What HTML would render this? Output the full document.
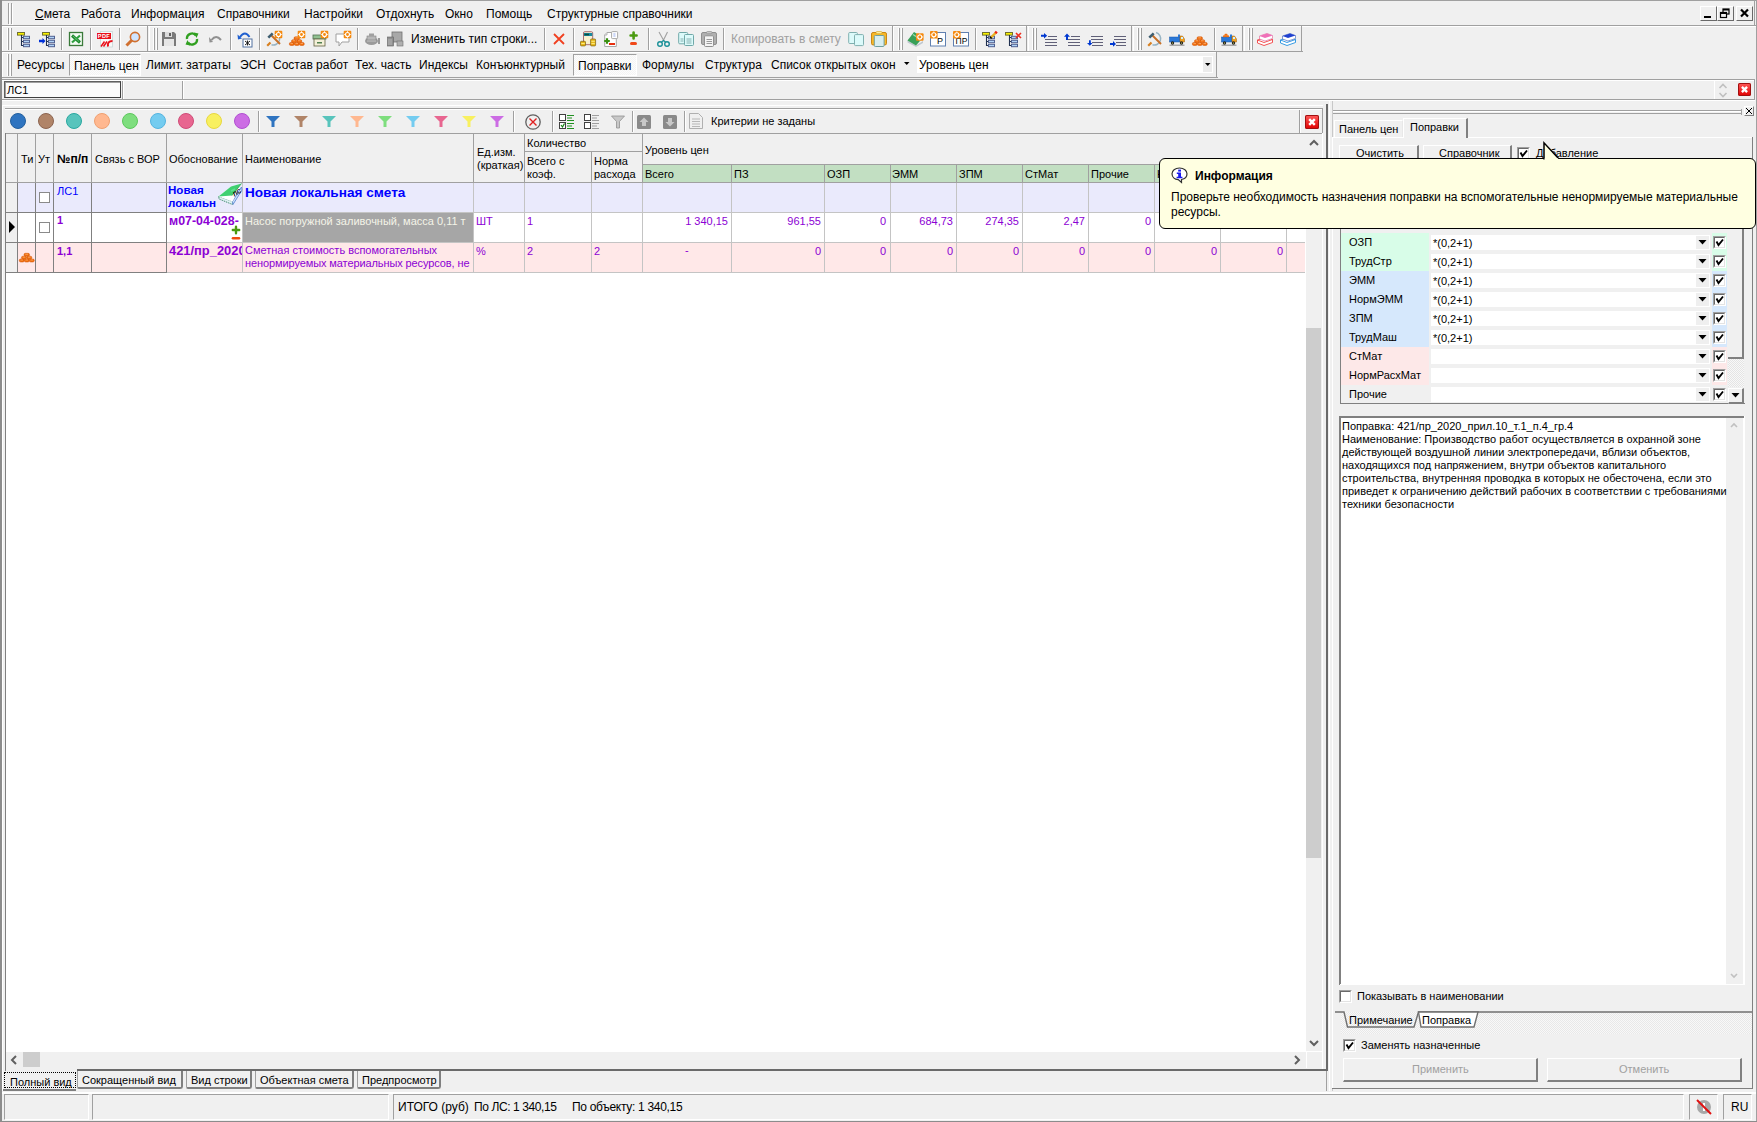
<!DOCTYPE html><html><head><meta charset="utf-8"><style>*{margin:0;padding:0}
html,body{width:1757px;height:1122px;overflow:hidden;background:#f0f0f0}
body div{position:absolute}
.t{white-space:nowrap;font-family:"Liberation Sans",sans-serif}
svg{position:absolute}</style></head><body><div style="left:0px;top:0px;width:1757px;height:1px;background:#a0a0a0"></div>
<div style="left:0px;top:0px;width:2px;height:1122px;background:#8c8c8c"></div>
<div style="left:1756px;top:0px;width:1px;height:1122px;background:#a0a0a0"></div>
<div style="left:0px;top:1121px;width:1757px;height:1px;background:#8c8c8c"></div>
<div style="left:8px;top:3px;width:1px;height:21px;background:#a0a0a0"></div>
<div style="left:9px;top:4px;width:1px;height:21px;background:#ffffff"></div>
<div style="left:11px;top:3px;width:1px;height:21px;background:#a0a0a0"></div>
<div style="left:12px;top:4px;width:1px;height:21px;background:#ffffff"></div>
<div class="t" style="left:35px;top:8px;font-size:12px;line-height:12px;font-weight:400;color:#000;"><u>С</u>мета</div>
<div class="t" style="left:81px;top:8px;font-size:12px;line-height:12px;font-weight:400;color:#000;">Работа</div>
<div class="t" style="left:131px;top:8px;font-size:12px;line-height:12px;font-weight:400;color:#000;">Информация</div>
<div class="t" style="left:217px;top:8px;font-size:12px;line-height:12px;font-weight:400;color:#000;">Справочники</div>
<div class="t" style="left:304px;top:8px;font-size:12px;line-height:12px;font-weight:400;color:#000;">Настройки</div>
<div class="t" style="left:376px;top:8px;font-size:12px;line-height:12px;font-weight:400;color:#000;">Отдохнуть</div>
<div class="t" style="left:445px;top:8px;font-size:12px;line-height:12px;font-weight:400;color:#000;">Окно</div>
<div class="t" style="left:486px;top:8px;font-size:12px;line-height:12px;font-weight:400;color:#000;">Помощь</div>
<div class="t" style="left:547px;top:8px;font-size:12px;line-height:12px;font-weight:400;color:#000;">Структурные справочники</div>
<div style="left:1700px;top:6px;width:17px;height:15px;border-top:1px solid #ffffff;border-left:1px solid #ffffff;border-right:1px solid #696969;border-bottom:1px solid #696969;box-sizing:border-box;background:#f0f0f0;"></div>
<div style="left:1717px;top:6px;width:17px;height:15px;border-top:1px solid #ffffff;border-left:1px solid #ffffff;border-right:1px solid #696969;border-bottom:1px solid #696969;box-sizing:border-box;background:#f0f0f0;"></div>
<div style="left:1736px;top:6px;width:17px;height:15px;border-top:1px solid #ffffff;border-left:1px solid #ffffff;border-right:1px solid #696969;border-bottom:1px solid #696969;box-sizing:border-box;background:#f0f0f0;"></div>
<svg style="position:absolute;left:1700px;top:6px;overflow:visible" width="17" height="15" viewBox="0 0 17 15"><rect x="4" y="10" width="7" height="2" fill="#000"/></svg>
<svg style="position:absolute;left:1717px;top:6px;overflow:visible" width="17" height="15" viewBox="0 0 17 15"><rect x="6" y="3" width="6" height="5" fill="none" stroke="#000" stroke-width="1.2"/><rect x="6" y="3" width="6" height="1.5" fill="#000"/><rect x="3.5" y="6.5" width="6" height="5" fill="#f0f0f0" stroke="#000" stroke-width="1.2"/><rect x="3.5" y="6.5" width="6" height="1.5" fill="#000"/></svg>
<svg style="position:absolute;left:1736px;top:6px;overflow:visible" width="17" height="15" viewBox="0 0 17 15"><path d="M5 3.5 L12 10.5 M12 3.5 L5 10.5" stroke="#000" stroke-width="2.2"/></svg>
<div style="left:1754px;top:1px;width:1px;height:25px;background:#a0a0a0"></div>
<div style="left:2px;top:25px;width:1754px;height:1px;background:#a0a0a0"></div>
<div style="left:2px;top:26px;width:1754px;height:1px;background:#ffffff"></div>
<div style="left:2px;top:26px;width:145px;height:1px;background:#ffffff"></div>
<div style="left:2px;top:26px;width:1px;height:25px;background:#ffffff"></div>
<div style="left:2px;top:51px;width:147px;height:1px;background:#a0a0a0"></div>
<div style="left:147px;top:26px;width:1px;height:26px;background:#a0a0a0"></div>
<div style="left:149px;top:26px;width:743px;height:1px;background:#ffffff"></div>
<div style="left:149px;top:26px;width:1px;height:25px;background:#ffffff"></div>
<div style="left:149px;top:51px;width:745px;height:1px;background:#a0a0a0"></div>
<div style="left:892px;top:26px;width:1px;height:26px;background:#a0a0a0"></div>
<div style="left:893px;top:26px;width:133px;height:1px;background:#ffffff"></div>
<div style="left:893px;top:26px;width:1px;height:25px;background:#ffffff"></div>
<div style="left:893px;top:51px;width:135px;height:1px;background:#a0a0a0"></div>
<div style="left:1026px;top:26px;width:1px;height:26px;background:#a0a0a0"></div>
<div style="left:1028px;top:26px;width:103px;height:1px;background:#ffffff"></div>
<div style="left:1028px;top:26px;width:1px;height:25px;background:#ffffff"></div>
<div style="left:1028px;top:51px;width:105px;height:1px;background:#a0a0a0"></div>
<div style="left:1131px;top:26px;width:1px;height:26px;background:#a0a0a0"></div>
<div style="left:1133px;top:26px;width:109px;height:1px;background:#ffffff"></div>
<div style="left:1133px;top:26px;width:1px;height:25px;background:#ffffff"></div>
<div style="left:1133px;top:51px;width:111px;height:1px;background:#a0a0a0"></div>
<div style="left:1242px;top:26px;width:1px;height:26px;background:#a0a0a0"></div>
<div style="left:1244px;top:26px;width:57px;height:1px;background:#ffffff"></div>
<div style="left:1244px;top:26px;width:1px;height:25px;background:#ffffff"></div>
<div style="left:1244px;top:51px;width:59px;height:1px;background:#a0a0a0"></div>
<div style="left:1301px;top:26px;width:1px;height:26px;background:#a0a0a0"></div>
<div style="left:7px;top:28px;width:1px;height:22px;background:#ffffff"></div>
<div style="left:8px;top:28px;width:1px;height:22px;background:#a0a0a0"></div>
<div style="left:10px;top:28px;width:1px;height:22px;background:#ffffff"></div>
<div style="left:11px;top:28px;width:1px;height:22px;background:#a0a0a0"></div>
<div style="left:153px;top:28px;width:1px;height:22px;background:#ffffff"></div>
<div style="left:154px;top:28px;width:1px;height:22px;background:#a0a0a0"></div>
<div style="left:156px;top:28px;width:1px;height:22px;background:#ffffff"></div>
<div style="left:157px;top:28px;width:1px;height:22px;background:#a0a0a0"></div>
<div style="left:898px;top:28px;width:1px;height:22px;background:#ffffff"></div>
<div style="left:899px;top:28px;width:1px;height:22px;background:#a0a0a0"></div>
<div style="left:901px;top:28px;width:1px;height:22px;background:#ffffff"></div>
<div style="left:902px;top:28px;width:1px;height:22px;background:#a0a0a0"></div>
<div style="left:1032px;top:28px;width:1px;height:22px;background:#ffffff"></div>
<div style="left:1033px;top:28px;width:1px;height:22px;background:#a0a0a0"></div>
<div style="left:1035px;top:28px;width:1px;height:22px;background:#ffffff"></div>
<div style="left:1036px;top:28px;width:1px;height:22px;background:#a0a0a0"></div>
<div style="left:1137px;top:28px;width:1px;height:22px;background:#ffffff"></div>
<div style="left:1138px;top:28px;width:1px;height:22px;background:#a0a0a0"></div>
<div style="left:1140px;top:28px;width:1px;height:22px;background:#ffffff"></div>
<div style="left:1141px;top:28px;width:1px;height:22px;background:#a0a0a0"></div>
<div style="left:1248px;top:28px;width:1px;height:22px;background:#ffffff"></div>
<div style="left:1249px;top:28px;width:1px;height:22px;background:#a0a0a0"></div>
<div style="left:1251px;top:28px;width:1px;height:22px;background:#ffffff"></div>
<div style="left:1252px;top:28px;width:1px;height:22px;background:#a0a0a0"></div>
<svg style="position:absolute;left:16px;top:31px;overflow:visible" width="16" height="16" viewBox="0 0 16 16"><rect x="1.5" y="1.5" width="7" height="2.6" fill="#f8f000" stroke="#707030" stroke-width="1"/><path d="M5.5 4 V14.5 H7.5 M5.5 6.5 H7.5 M5.5 10.5 H7.5" stroke="#203050" stroke-width="1.1" fill="none"/><g fill="#b0d4f8" stroke="#506090" stroke-width="1"><rect x="7.5" y="5.3" width="6" height="2.4"/><rect x="7.5" y="9.3" width="6" height="2.4"/><rect x="7.5" y="13.3" width="6" height="2.4"/></g></svg>
<svg style="position:absolute;left:39px;top:31px;overflow:visible" width="16" height="16" viewBox="0 0 16 16"><rect x="3.5" y="1.5" width="7" height="2.6" fill="#f8f000" stroke="#707030" stroke-width="1"/><path d="M7.5 4 V14.5 H9.5 M7.5 6.5 H9.5 M7.5 10.5 H9.5" stroke="#203050" stroke-width="1.1" fill="none"/><g fill="#b0d4f8" stroke="#506090" stroke-width="1"><rect x="9.5" y="5.3" width="6" height="2.4"/><rect x="9.5" y="9.3" width="6" height="2.4"/><rect x="9.5" y="13.3" width="6" height="2.4"/></g><path d="M0 8.8 H3.5 V7 L6.5 10 L3.5 13 V11.2 H0 Z" fill="#0030d8"/></svg>
<svg style="position:absolute;left:68px;top:31px;overflow:visible" width="16" height="16" viewBox="0 0 16 16"><rect x="1.5" y="1.5" width="13" height="13" fill="#f4fbf4" stroke="#3a7a3a" stroke-width="1.3"/><path d="M4 4.5 L12 11.5" stroke="#208a30" stroke-width="3"/><path d="M12 4.5 L4 11.5" stroke="#30a040" stroke-width="2.2"/><path d="M5 5 L11 10.5" stroke="#70c880" stroke-width="0.8"/></svg>
<svg style="position:absolute;left:97px;top:31px;overflow:visible" width="16" height="16" viewBox="0 0 16 16"><rect x="3.5" y="0.5" width="12" height="15.5" fill="#f8f8f8" stroke="#c8d8d8" stroke-width="0.8"/><rect x="0" y="2" width="14" height="6" fill="#e8101a"/><text x="7" y="7" font-size="5.6" font-weight="700" fill="#fff" text-anchor="middle" font-family="Liberation Sans" letter-spacing="0.4">PDF</text><path d="M4 15.5 L7.5 10.5 M6.5 15.5 L10 10.5" stroke="#e8101a" stroke-width="1.5"/><path d="M15.5 10 Q10 10 11 15.5" stroke="#e8101a" stroke-width="2" fill="none"/></svg>
<svg style="position:absolute;left:125px;top:31px;overflow:visible" width="16" height="16" viewBox="0 0 16 16"><circle cx="10" cy="6" r="4.6" fill="#cfe4ff" stroke="#d07030" stroke-width="1.6"/><path d="M7 9 L1.5 14.5" stroke="#d07030" stroke-width="3"/></svg>
<svg style="position:absolute;left:161px;top:31px;overflow:visible" width="16" height="16" viewBox="0 0 16 16"><path d="M1 1 H13 L15 3 V15 H1 Z" fill="#7a7a7a"/><rect x="4" y="1" width="7" height="5" fill="#dcdcdc"/><rect x="8" y="2" width="2" height="3" fill="#606060"/><rect x="3" y="8" width="10" height="7" fill="#e6e6e6"/></svg>
<svg style="position:absolute;left:184px;top:31px;overflow:visible" width="16" height="16" viewBox="0 0 16 16"><path d="M3 8 A5 5 0 0 1 12 4.5" stroke="#30a020" stroke-width="2.4" fill="none"/><path d="M13 8 A5 5 0 0 1 4 11.5" stroke="#30a020" stroke-width="2.4" fill="none"/><path d="M10 1.5 L14.5 2.5 L12.5 7 Z" fill="#30a020"/><path d="M6 14.5 L1.5 13.5 L3.5 9 Z" fill="#30a020"/></svg>
<svg style="position:absolute;left:208px;top:31px;overflow:visible" width="16" height="16" viewBox="0 0 16 16"><path d="M3.5 9 Q8 3 13 9" stroke="#909090" stroke-width="2" fill="none"/><path d="M1 6 L5 11 L1.5 11.5 Z" fill="#909090"/></svg>
<svg style="position:absolute;left:237px;top:31px;overflow:visible" width="16" height="16" viewBox="0 0 16 16"><path d="M3 6 Q8 -1 12.5 6" stroke="#2060d0" stroke-width="2" fill="none"/><path d="M0.5 3.5 L5 7.5 L1 8.5 Z" fill="#2060d0"/><rect x="6" y="8" width="9" height="8" fill="#fff" stroke="#5070a0" stroke-width="1"/><path d="M8 10 L13 14 M13 10 L8 14 M10.5 9.5 V14.5" stroke="#202020" stroke-width="1"/></svg>
<svg style="position:absolute;left:266px;top:31px;overflow:visible" width="16" height="16" viewBox="0 0 16 16"><path d="M9 1.5 A6.2 6.2 0 0 1 5.5 13.8" stroke="#98b4c4" stroke-width="1.5" fill="none"/><path d="M1.2 14.8 L4.5 11.5" stroke="#d88020" stroke-width="2.2"/><path d="M5.5 4.5 L14 13" stroke="#c87028" stroke-width="1.9"/><path d="M2.3 6.7 L6.7 2.3" stroke="#3e5e70" stroke-width="2.6"/><rect x="8.7" y="-0.2999999999999998" width="7.6" height="7.6" rx="1" fill="#f58a10"/><circle cx="12.5" cy="3.5" r="2" fill="none" stroke="#fff" stroke-width="1.1"/><path d="M12.5 0.20000000000000018 V1.2000000000000002 M12.5 5.8 V6.8 M9.2 3.5 H10.2 M14.8 3.5 H15.8" stroke="#fff" stroke-width="0.9"/></svg>
<svg style="position:absolute;left:289px;top:31px;overflow:visible" width="16" height="16" viewBox="0 0 16 16"><g fill="#f07010" stroke="#d05000" stroke-width="0.5"><rect x="0.3" y="11.5" width="5" height="3" rx="1.4"/><rect x="5.3" y="11.5" width="5" height="3" rx="1.4"/><rect x="10.3" y="11.5" width="5" height="3" rx="1.4"/><rect x="2.5" y="8.7" width="5" height="3" rx="1.4"/><rect x="7.8" y="8.7" width="5" height="3" rx="1.4"/><rect x="5" y="5.8" width="5.5" height="3" rx="1.4"/></g><g stroke="#ffb070" stroke-width="0.7"><path d="M1.5 12.5 H4 M6.5 12.5 H9 M11.5 12.5 H14 M3.7 9.7 H6.2 M9 9.7 H11.5 M6.3 6.8 H9"/></g><rect x="8.7" y="-0.2999999999999998" width="7.6" height="7.6" rx="1" fill="#f58a10"/><circle cx="12.5" cy="3.5" r="2" fill="none" stroke="#fff" stroke-width="1.1"/><path d="M12.5 0.20000000000000018 V1.2000000000000002 M12.5 5.8 V6.8 M9.2 3.5 H10.2 M14.8 3.5 H15.8" stroke="#fff" stroke-width="0.9"/></svg>
<svg style="position:absolute;left:312px;top:31px;overflow:visible" width="16" height="16" viewBox="0 0 16 16"><rect x="1" y="4" width="13" height="4" fill="#90c090" stroke="#507050" stroke-width="0.8"/><rect x="2" y="8" width="11" height="7" fill="#f4f0d8" stroke="#606040" stroke-width="0.8"/><rect x="5" y="11" width="5" height="1.5" fill="#508050"/><rect x="8.7" y="-0.2999999999999998" width="7.6" height="7.6" rx="1" fill="#f58a10"/><circle cx="12.5" cy="3.5" r="2" fill="none" stroke="#fff" stroke-width="1.1"/><path d="M12.5 0.20000000000000018 V1.2000000000000002 M12.5 5.8 V6.8 M9.2 3.5 H10.2 M14.8 3.5 H15.8" stroke="#fff" stroke-width="0.9"/></svg>
<svg style="position:absolute;left:335px;top:31px;overflow:visible" width="16" height="16" viewBox="0 0 16 16"><path d="M1 3 H14 V11 H7 L4 15 V11 H1 Z" fill="#fff" stroke="#a0a0a0" stroke-width="1"/><rect x="8.7" y="-0.2999999999999998" width="7.6" height="7.6" rx="1" fill="#f58a10"/><circle cx="12.5" cy="3.5" r="2" fill="none" stroke="#fff" stroke-width="1.1"/><path d="M12.5 0.20000000000000018 V1.2000000000000002 M12.5 5.8 V6.8 M9.2 3.5 H10.2 M14.8 3.5 H15.8" stroke="#fff" stroke-width="0.9"/></svg>
<svg style="position:absolute;left:364px;top:31px;overflow:visible" width="16" height="16" viewBox="0 0 16 16"><ellipse cx="7.5" cy="10" rx="6.5" ry="4" fill="#9a9a9a"/><rect x="3" y="5" width="9" height="4" fill="#b8b8b8" stroke="#808080" stroke-width="0.6"/><rect x="5" y="2.5" width="5" height="2.5" fill="#a0a0a0"/><path d="M15 7 V13" stroke="#404040" stroke-width="1"/><path d="M3 10 H12" stroke="#d0d0d0" stroke-width="0.8"/></svg>
<svg style="position:absolute;left:387px;top:31px;overflow:visible" width="16" height="16" viewBox="0 0 16 16"><rect x="5" y="1" width="10" height="10" fill="#a8a8a8" stroke="#707070" stroke-width="0.8"/><rect x="0.5" y="6" width="6" height="9" fill="#909090" stroke="#606060" stroke-width="0.6"/><path d="M2 8 V14 M4 8 V14" stroke="#c0c0c0" stroke-width="0.8"/><rect x="10" y="10" width="6" height="5" fill="#b0b0b0" stroke="#707070" stroke-width="0.6"/></svg>
<svg style="position:absolute;left:551px;top:31px;overflow:visible" width="16" height="16" viewBox="0 0 16 16"><path d="M3 3 L13 13 M13 3 L3 13" stroke="#f04020" stroke-width="1.8"/></svg>
<svg style="position:absolute;left:580px;top:31px;overflow:visible" width="16" height="16" viewBox="0 0 16 16"><rect x="3.5" y="0.7" width="9.2" height="13" rx="1.2" fill="#f6eed6" stroke="#a87070" stroke-width="1"/><rect x="4" y="2" width="8.3" height="3" fill="#1888a0"/><rect x="4.5" y="2.7" width="4.5" height="1.6" fill="#0a5040"/><g fill="#fff8c0"><rect x="5" y="6.3" width="1.3" height="1.3"/><rect x="7" y="6.3" width="1.3" height="1.3"/><rect x="9" y="6.3" width="1.3" height="1.3"/><rect x="5" y="8.5" width="1.3" height="1.3"/><rect x="7" y="8.5" width="1.3" height="1.3"/><rect x="5" y="10.7" width="1.3" height="1.3"/><rect x="7" y="10.7" width="1.3" height="1.3"/></g><g fill="#e8b818" stroke="#7a6010" stroke-width="0.7"><rect x="0.5" y="10.3" width="5" height="4.6" rx="0.8"/><rect x="10.6" y="8" width="5" height="6.9" rx="0.8"/></g><path d="M1.3 12.5 H4.7 M11.4 10.3 H14.8 M11.4 12.6 H14.8" stroke="#fff8a0" stroke-width="0.8"/></svg>
<svg style="position:absolute;left:603px;top:31px;overflow:visible" width="16" height="16" viewBox="0 0 16 16"><path d="M4 1.5 H13.3 V15.5 H1.7 V4 Z" fill="#fff" stroke="#a8a8a8" stroke-width="1"/><path d="M4 1.5 V4 H1.7" fill="#e8e8e8" stroke="#a8a8a8" stroke-width="0.8"/><rect x="8.6" y="0.6" width="6" height="7" rx="0.8" fill="#fff" stroke="#a8a8a8" stroke-width="1"/><path d="M10.3 3 H12.5 M10.3 5 H12.5" stroke="#90a8f0" stroke-width="0.9"/><path d="M1.2 10 H6.8 M4 7.2 V12.8" stroke="#3a9010" stroke-width="2.2"/><rect x="6" y="12" width="6" height="2" fill="#e83010"/></svg>
<svg style="position:absolute;left:629px;top:31px;overflow:visible" width="16" height="16" viewBox="0 0 16 16"><path d="M1.6 4.5 H7.6 M4.6 1.5 V7.5" stroke="#4a9a10" stroke-width="2.6" stroke-linecap="round"/><rect x="1" y="11" width="7" height="3" rx="1.5" fill="#f04818"/></svg>
<svg style="position:absolute;left:656px;top:31px;overflow:visible" width="16" height="16" viewBox="0 0 16 16"><path d="M3 1 L8 10 M11.5 1 L7 10" stroke="#a0a0a0" stroke-width="1.1" fill="none"/><circle cx="4" cy="13" r="2.3" fill="none" stroke="#1a9098" stroke-width="1.4"/><circle cx="11" cy="13" r="2.3" fill="none" stroke="#1a9098" stroke-width="1.4"/><path d="M5.5 11 L7.5 9.5 L9.5 11" stroke="#1a9098" stroke-width="1.2" fill="none"/></svg>
<svg style="position:absolute;left:678px;top:31px;overflow:visible" width="16" height="16" viewBox="0 0 16 16"><rect x="0.7" y="1.5" width="9" height="11.3" rx="1" fill="#dcfafa" stroke="#70a8a8" stroke-width="1"/><path d="M2.5 8 H5.5 M2.5 10 H5.5" stroke="#70a0a0" stroke-width="0.8"/><rect x="6.5" y="3.5" width="9" height="11" rx="1" fill="#dcfafa" stroke="#70a8a8" stroke-width="1"/><path d="M8.5 8 H13.5 M8.5 10 H13.5 M8.5 12 H13.5" stroke="#70a0a0" stroke-width="0.8"/></svg>
<svg style="position:absolute;left:701px;top:31px;overflow:visible" width="16" height="16" viewBox="0 0 16 16"><rect x="0.5" y="1.5" width="15" height="12" rx="1.5" fill="#b0b0b0" stroke="#909090" stroke-width="1"/><rect x="5.5" y="0.5" width="5.5" height="2.2" rx="1" fill="#c8c8c8" stroke="#909090" stroke-width="0.7"/><rect x="3.5" y="4.8" width="9" height="10.7" rx="1" fill="#f4f4f4" stroke="#909090" stroke-width="1"/><path d="M5.5 8.5 H11 M5.5 10.5 H11 M5.5 12.5 H11" stroke="#909090" stroke-width="0.9"/></svg>
<svg style="position:absolute;left:848px;top:31px;overflow:visible" width="16" height="16" viewBox="0 0 16 16"><rect x="0.7" y="1.5" width="8.7" height="11" rx="1" fill="#dcfafa" stroke="#80b0b0" stroke-width="1"/><rect x="6.5" y="3.6" width="9" height="11" rx="1" fill="#dcfafa" stroke="#80b0b0" stroke-width="1"/></svg>
<svg style="position:absolute;left:871px;top:31px;overflow:visible" width="16" height="16" viewBox="0 0 16 16"><rect x="0.5" y="1.5" width="15" height="12.4" rx="1.5" fill="#f8b828" stroke="#c88818" stroke-width="1"/><rect x="5" y="0.5" width="6" height="2.2" rx="1" fill="#fff0a0" stroke="#d0a020" stroke-width="0.6"/><rect x="3.3" y="4.5" width="9.8" height="11" rx="1" fill="#d8eef0" stroke="#70a0a0" stroke-width="1"/></svg>
<svg style="position:absolute;left:907px;top:31px;overflow:visible" width="16" height="16" viewBox="0 0 16 16"><path d="M0.5 9.5 L9 14.5 L16 10 L16 12 L9 16 L0.5 11.5 Z" fill="#c0c8d0"/><path d="M0.5 9.5 L7 1 L16 6.5 L9 14.5 Z" fill="#38a058"/><path d="M6 3.5 L9 5.5" stroke="#a0e0b0" stroke-width="1.2"/><rect x="9.0" y="2.2" width="7.6" height="7.6" rx="1" fill="#f58a10"/><circle cx="12.8" cy="6" r="2" fill="none" stroke="#fff" stroke-width="1.1"/><path d="M12.8 2.7 V3.7 M12.8 8.3 V9.3 M9.5 6 H10.5 M15.100000000000001 6 H16.1" stroke="#fff" stroke-width="0.9"/></svg>
<svg style="position:absolute;left:930px;top:31px;overflow:visible" width="16" height="16" viewBox="0 0 16 16"><rect x="0.5" y="1.5" width="15" height="13.5" fill="#fff" stroke="#6080b0" stroke-width="1"/><text x="10" y="13" font-size="9" fill="#000" text-anchor="middle" font-family="Liberation Sans">P</text><rect x="0.0" y="0.0" width="7.6" height="7.6" rx="1" fill="#f58a10"/><circle cx="3.8" cy="3.8" r="2" fill="none" stroke="#fff" stroke-width="1.1"/><path d="M3.8 0.5 V1.5 M3.8 6.1 V7.1 M0.5 3.8 H1.5 M6.1 3.8 H7.1" stroke="#fff" stroke-width="0.9"/></svg>
<svg style="position:absolute;left:953px;top:31px;overflow:visible" width="16" height="16" viewBox="0 0 16 16"><rect x="0.5" y="1.5" width="15" height="13.5" fill="#fff" stroke="#6080b0" stroke-width="1"/><text x="8.5" y="13" font-size="8.5" fill="#000" text-anchor="middle" font-family="Liberation Sans">ПР</text><rect x="0.0" y="0.0" width="7.6" height="7.6" rx="1" fill="#f58a10"/><circle cx="3.8" cy="3.8" r="2" fill="none" stroke="#fff" stroke-width="1.1"/><path d="M3.8 0.5 V1.5 M3.8 6.1 V7.1 M0.5 3.8 H1.5 M6.1 3.8 H7.1" stroke="#fff" stroke-width="0.9"/></svg>
<svg style="position:absolute;left:982px;top:31px;overflow:visible" width="16" height="16" viewBox="0 0 16 16"><rect x="0.5" y="1.5" width="7" height="2.6" fill="#f8f000" stroke="#707030" stroke-width="1"/><path d="M4.5 4 V14.5 H6.5 M4.5 6.5 H6.5 M4.5 10.5 H6.5" stroke="#203050" stroke-width="1.1" fill="none"/><g fill="#b0d4f8" stroke="#506090" stroke-width="1"><rect x="6.5" y="5.3" width="6" height="2.4"/><rect x="6.5" y="9.3" width="6" height="2.4"/><rect x="6.5" y="13.3" width="6" height="2.4"/></g><path d="M8.5 7 L14 1.5" stroke="#e8b020" stroke-width="2.4"/><path d="M13.3 2.2 L14.8 0.7" stroke="#f02010" stroke-width="2.6"/><path d="M8.3 7.2 L9.3 6.2" stroke="#000" stroke-width="2.4"/></svg>
<svg style="position:absolute;left:1005px;top:31px;overflow:visible" width="16" height="16" viewBox="0 0 16 16"><rect x="0.5" y="1.5" width="7" height="2.6" fill="#f8f000" stroke="#707030" stroke-width="1"/><path d="M4.5 4 V14.5 H6.5 M4.5 6.5 H6.5 M4.5 10.5 H6.5" stroke="#203050" stroke-width="1.1" fill="none"/><g fill="#b0d4f8" stroke="#506090" stroke-width="1"><rect x="6.5" y="5.3" width="6" height="2.4"/><rect x="6.5" y="9.3" width="6" height="2.4"/><rect x="6.5" y="13.3" width="6" height="2.4"/></g><path d="M11 2 L16 7 M16 2 L11 7" stroke="#f03020" stroke-width="1.6"/></svg>
<svg style="position:absolute;left:1041px;top:31px;overflow:visible" width="16" height="16" viewBox="0 0 16 16"><path d="M4 5.5 H16 M4 8.5 H16 M4 11.5 H16 M4 14.5 H16" stroke="#606078" stroke-width="1.1"/><rect x="3" y="3" width="4" height="5" fill="#f0f0f0"/><path d="M0 3.8 H3 V2 L6.2 4.8 L3 7.6 V5.8 H0 Z" fill="#0038d0"/></svg>
<svg style="position:absolute;left:1064px;top:31px;overflow:visible" width="16" height="16" viewBox="0 0 16 16"><path d="M4 5.5 H16 M4 8.5 H16 M4 11.5 H16 M4 14.5 H16" stroke="#606078" stroke-width="1.1"/><rect x="1" y="2" width="6" height="5" fill="#f0f0f0"/><path d="M2 9 V5.8 H0 L3 2.6 L6 5.8 H4 V9 Z" fill="#0038d0"/></svg>
<svg style="position:absolute;left:1087px;top:31px;overflow:visible" width="16" height="16" viewBox="0 0 16 16"><path d="M4 5.5 H16 M4 8.5 H16 M4 11.5 H16 M4 14.5 H16" stroke="#606078" stroke-width="1.1"/><rect x="0" y="10" width="5" height="6" fill="#f0f0f0"/><path d="M2 9.3 V12 H0 L2.8 14.8 L5.6 12 H3.8 V9.3 Z" fill="#0038d0"/></svg>
<svg style="position:absolute;left:1110px;top:31px;overflow:visible" width="16" height="16" viewBox="0 0 16 16"><path d="M4 5.5 H16 M4 8.5 H16 M4 11.5 H16 M4 14.5 H16" stroke="#606078" stroke-width="1.1"/><rect x="2" y="10" width="4" height="5" fill="#f0f0f0"/><path d="M0 11.9 H3 V10 L6 12.9 L3 15.8 V13.9 H0 Z" fill="#0038d0"/></svg>
<svg style="position:absolute;left:1147px;top:31px;overflow:visible" width="16" height="16" viewBox="0 0 16 16"><path d="M9 1.5 A6.2 6.2 0 0 1 5.5 13.8" stroke="#98b4c4" stroke-width="1.5" fill="none"/><path d="M1.2 14.8 L4.5 11.5" stroke="#d88020" stroke-width="2.2"/><path d="M5.5 4.5 L14 13" stroke="#c87028" stroke-width="1.9"/><path d="M2.3 6.7 L6.7 2.3" stroke="#3e5e70" stroke-width="2.6"/></svg>
<svg style="position:absolute;left:1169px;top:31px;overflow:visible" width="16" height="16" viewBox="0 0 16 16"><rect x="0.5" y="6" width="10.5" height="5" fill="#2a78d8" stroke="#1a58a8" stroke-width="0.5"/><path d="M9 3.5 L11 3.5 L11 6 L9 6 Z" fill="#2a78d8"/><path d="M11 5 H13.5 L15.5 8 V11 H11 Z" fill="#f0a020" stroke="#a06010" stroke-width="0.5"/><rect x="12" y="6" width="2" height="2" fill="#d0f0ff"/><rect x="0.5" y="13.5" width="15" height="1.5" fill="#606060" opacity="0.5"/><circle cx="3.5" cy="12" r="1.7" fill="#202020"/><circle cx="3.5" cy="12" r="0.6" fill="#f0f060"/><circle cx="12.5" cy="12" r="1.7" fill="#202020"/><circle cx="12.5" cy="12" r="0.6" fill="#f0f060"/></svg>
<svg style="position:absolute;left:1192px;top:31px;overflow:visible" width="16" height="16" viewBox="0 0 16 16"><g fill="#f07010" stroke="#d05000" stroke-width="0.5"><rect x="0.3" y="11.5" width="5" height="3" rx="1.4"/><rect x="5.3" y="11.5" width="5" height="3" rx="1.4"/><rect x="10.3" y="11.5" width="5" height="3" rx="1.4"/><rect x="2.5" y="8.7" width="5" height="3" rx="1.4"/><rect x="7.8" y="8.7" width="5" height="3" rx="1.4"/><rect x="5" y="5.8" width="5.5" height="3" rx="1.4"/></g><g stroke="#ffb070" stroke-width="0.7"><path d="M1.5 12.5 H4 M6.5 12.5 H9 M11.5 12.5 H14 M3.7 9.7 H6.2 M9 9.7 H11.5 M6.3 6.8 H9"/></g></svg>
<svg style="position:absolute;left:1221px;top:31px;overflow:visible" width="16" height="16" viewBox="0 0 16 16"><rect x="0.5" y="6" width="10.5" height="5" fill="#2a78d8" stroke="#1a58a8" stroke-width="0.5"/><path d="M9 3.5 L11 3.5 L11 6 L9 6 Z" fill="#2a78d8"/><path d="M11 5 H13.5 L15.5 8 V11 H11 Z" fill="#f0a020" stroke="#a06010" stroke-width="0.5"/><rect x="12" y="6" width="2" height="2" fill="#d0f0ff"/><rect x="0.5" y="13.5" width="15" height="1.5" fill="#606060" opacity="0.5"/><circle cx="3.5" cy="12" r="1.7" fill="#202020"/><circle cx="3.5" cy="12" r="0.6" fill="#f0f060"/><circle cx="12.5" cy="12" r="1.7" fill="#202020"/><circle cx="12.5" cy="12" r="0.6" fill="#f0f060"/><g fill="#f07010"><rect x="2" y="4.3" width="3" height="2" rx="0.8"/><rect x="5" y="4.3" width="3" height="2" rx="0.8"/><rect x="3.5" y="2.8" width="3" height="2" rx="0.8"/></g></svg>
<svg style="position:absolute;left:1257px;top:31px;overflow:visible" width="16" height="16" viewBox="0 0 16 16"><path d="M0.5 9 L9 6.5 L15.5 8.5 V11.5 L7 14.5 L0.5 12 Z" fill="#fff" stroke="#f04040" stroke-width="0.9"/><path d="M0.5 9 L7 11.5 L15.5 8.5" stroke="#f04040" stroke-width="0.9" fill="none"/><path d="M2.5 5 L10 2.5 L15.5 4.5 V7.5 L8 10 L2.5 8 Z" fill="#fff" stroke="#e070a0" stroke-width="0.7"/><path d="M2.5 5 L10 2.5 L15.5 4.5 L8 7 Z" fill="#f070b8"/></svg>
<svg style="position:absolute;left:1280px;top:31px;overflow:visible" width="16" height="16" viewBox="0 0 16 16"><path d="M0.5 9 L9 6.5 L15.5 8.5 V11.5 L7 14.5 L0.5 12 Z" fill="#fff" stroke="#2090e0" stroke-width="0.9"/><path d="M0.5 9 L7 11.5 L15.5 8.5" stroke="#2090e0" stroke-width="0.9" fill="none"/><path d="M2.5 5 L10 2.5 L15.5 4.5 V7.5 L8 10 L2.5 8 Z" fill="#fff" stroke="#5070c0" stroke-width="0.7"/><path d="M2.5 5 L10 2.5 L15.5 4.5 L8 7 Z" fill="#2040d0"/></svg>
<div style="left:61px;top:28px;width:1px;height:22px;background:#a0a0a0"></div>
<div style="left:62px;top:28px;width:1px;height:22px;background:#ffffff"></div>
<div style="left:90px;top:28px;width:1px;height:22px;background:#a0a0a0"></div>
<div style="left:91px;top:28px;width:1px;height:22px;background:#ffffff"></div>
<div style="left:119px;top:28px;width:1px;height:22px;background:#a0a0a0"></div>
<div style="left:120px;top:28px;width:1px;height:22px;background:#ffffff"></div>
<div style="left:230px;top:28px;width:1px;height:22px;background:#a0a0a0"></div>
<div style="left:231px;top:28px;width:1px;height:22px;background:#ffffff"></div>
<div style="left:259px;top:28px;width:1px;height:22px;background:#a0a0a0"></div>
<div style="left:260px;top:28px;width:1px;height:22px;background:#ffffff"></div>
<div style="left:357px;top:28px;width:1px;height:22px;background:#a0a0a0"></div>
<div style="left:358px;top:28px;width:1px;height:22px;background:#ffffff"></div>
<div style="left:544px;top:28px;width:1px;height:22px;background:#a0a0a0"></div>
<div style="left:545px;top:28px;width:1px;height:22px;background:#ffffff"></div>
<div style="left:573px;top:28px;width:1px;height:22px;background:#a0a0a0"></div>
<div style="left:574px;top:28px;width:1px;height:22px;background:#ffffff"></div>
<div style="left:648px;top:28px;width:1px;height:22px;background:#a0a0a0"></div>
<div style="left:649px;top:28px;width:1px;height:22px;background:#ffffff"></div>
<div style="left:723px;top:28px;width:1px;height:22px;background:#a0a0a0"></div>
<div style="left:724px;top:28px;width:1px;height:22px;background:#ffffff"></div>
<div style="left:975px;top:28px;width:1px;height:22px;background:#a0a0a0"></div>
<div style="left:976px;top:28px;width:1px;height:22px;background:#ffffff"></div>
<div style="left:1214px;top:28px;width:1px;height:22px;background:#a0a0a0"></div>
<div style="left:1215px;top:28px;width:1px;height:22px;background:#ffffff"></div>
<div class="t" style="left:411px;top:33px;font-size:12px;line-height:12px;font-weight:400;color:#000;">Изменить тип строки...</div>
<div class="t" style="left:731px;top:33px;font-size:12px;line-height:12px;font-weight:400;color:#a0a0a0;">Копировать в смету</div>
<div style="left:2px;top:52px;width:1214px;height:1px;background:#ffffff"></div>
<div style="left:2px;top:52px;width:1px;height:25px;background:#ffffff"></div>
<div style="left:2px;top:77px;width:1216px;height:1px;background:#a0a0a0"></div>
<div style="left:1216px;top:52px;width:1px;height:26px;background:#a0a0a0"></div>
<div style="left:7px;top:54px;width:1px;height:22px;background:#ffffff"></div>
<div style="left:8px;top:54px;width:1px;height:22px;background:#a0a0a0"></div>
<div style="left:10px;top:54px;width:1px;height:22px;background:#ffffff"></div>
<div style="left:11px;top:54px;width:1px;height:22px;background:#a0a0a0"></div>
<div style="left:69px;top:54px;width:72px;height:22px;background:repeating-conic-gradient(#f4f4f4 0% 25%, #fcfcfc 0% 50%) 0 0/2px 2px;border-top:1px solid #a0a0a0;border-left:1px solid #a0a0a0;border-right:1px solid #fff;border-bottom:1px solid #fff;box-sizing:border-box"></div>
<div style="left:573px;top:54px;width:64px;height:22px;background:repeating-conic-gradient(#f4f4f4 0% 25%, #fcfcfc 0% 50%) 0 0/2px 2px;border-top:1px solid #a0a0a0;border-left:1px solid #a0a0a0;border-right:1px solid #fff;border-bottom:1px solid #fff;box-sizing:border-box"></div>
<div class="t" style="left:17px;top:59px;font-size:12px;line-height:12px;font-weight:400;color:#000;">Ресурсы</div>
<div class="t" style="left:74px;top:60px;font-size:12px;line-height:12px;font-weight:400;color:#000;">Панель цен</div>
<div class="t" style="left:146px;top:59px;font-size:12px;line-height:12px;font-weight:400;color:#000;">Лимит. затраты</div>
<div class="t" style="left:240px;top:59px;font-size:12px;line-height:12px;font-weight:400;color:#000;">ЭСН</div>
<div class="t" style="left:273px;top:59px;font-size:12px;line-height:12px;font-weight:400;color:#000;">Состав работ</div>
<div class="t" style="left:355px;top:59px;font-size:12px;line-height:12px;font-weight:400;color:#000;">Тех. часть</div>
<div class="t" style="left:419px;top:59px;font-size:12px;line-height:12px;font-weight:400;color:#000;">Индексы</div>
<div class="t" style="left:476px;top:59px;font-size:12px;line-height:12px;font-weight:400;color:#000;">Конъюнктурный</div>
<div class="t" style="left:578px;top:60px;font-size:12px;line-height:12px;font-weight:400;color:#000;">Поправки</div>
<div class="t" style="left:642px;top:59px;font-size:12px;line-height:12px;font-weight:400;color:#000;">Формулы</div>
<div class="t" style="left:705px;top:59px;font-size:12px;line-height:12px;font-weight:400;color:#000;">Структура</div>
<div class="t" style="left:771px;top:59px;font-size:12px;line-height:12px;font-weight:400;color:#000;">Список открытых окон</div>
<svg style="position:absolute;left:904px;top:62px;overflow:visible" width="6" height="4" viewBox="0 0 6 4"><path d="M0 0 H5.5 L2.75 3 Z" fill="#000"/></svg>
<div style="left:917px;top:56px;width:296px;height:17px;background:#fff"></div>
<div style="left:1203px;top:57px;width:9px;height:15px;background:#ececec"></div>
<svg style="position:absolute;left:1205px;top:63px;overflow:visible" width="6" height="4" viewBox="0 0 6 4"><path d="M0 0 H5.5 L2.75 3 Z" fill="#000"/></svg>
<div class="t" style="left:919px;top:59px;font-size:12px;line-height:12px;font-weight:400;color:#000;">Уровень цен</div>
<div style="left:2px;top:79px;width:1753px;height:1px;background:#a0a0a0"></div>
<div style="left:2px;top:80px;width:1753px;height:1px;background:#ffffff"></div>
<div style="left:2px;top:99px;width:1753px;height:1px;background:#a0a0a0"></div>
<div style="left:2px;top:100px;width:1753px;height:1px;background:#ffffff"></div>
<div style="left:1754px;top:79px;width:1px;height:21px;background:#a0a0a0"></div>
<div style="left:4px;top:81px;width:117px;height:17px;background:#fbfbfb;border:1px solid #404040;border-top-color:#606060;border-left-color:#606060;box-sizing:border-box;box-shadow:inset 1px 1px 0 #a0a0a0"></div>
<div class="t" style="left:7px;top:85px;font-size:11px;line-height:11px;font-weight:400;color:#000;">ЛС1</div>
<div style="left:122px;top:81px;width:1px;height:18px;background:#a0a0a0"></div>
<div style="left:123px;top:81px;width:1px;height:18px;background:#ffffff"></div>
<div style="left:182px;top:81px;width:1px;height:18px;background:#a0a0a0"></div>
<div style="left:183px;top:81px;width:1px;height:18px;background:#ffffff"></div>
<div style="left:1714px;top:81px;width:1px;height:18px;background:#ffffff"></div>
<svg style="position:absolute;left:1718px;top:83px;overflow:visible" width="10" height="16" viewBox="0 0 10 16"><path d="M1.5 5 L5 1.5 L8.5 5" stroke="#c0c0c0" stroke-width="1.6" fill="none"/><path d="M1.5 10 L5 13.5 L8.5 10" stroke="#c0c0c0" stroke-width="1.6" fill="none"/></svg>
<div style="left:1738px;top:83px;width:13px;height:13px;background:linear-gradient(#ff5a5a,#e00000);border-radius:2px;box-shadow:0 0 0 1px #a01010 inset"></div>
<svg style="position:absolute;left:1738px;top:83px;overflow:visible" width="13" height="13" viewBox="0 0 13 13"><path d="M3.9 3.9 L9.1 9.1 M9.1 3.9 L3.9 9.1" stroke="#fff" stroke-width="2.4"/></svg>
<div style="left:2px;top:105px;width:1321px;height:1px;background:#ffffff"></div>
<div style="left:2px;top:105px;width:1px;height:986px;background:#ffffff"></div>
<div style="left:5px;top:108px;width:1318px;height:1px;background:#a0a0a0"></div>
<div style="left:5px;top:109px;width:1318px;height:1px;background:#ffffff"></div>
<svg style="position:absolute;left:10px;top:113px;overflow:visible" width="16" height="16" viewBox="0 0 16 16"><circle cx="8" cy="8" r="7.5" fill="#2f74c0" stroke="#24609f" stroke-width="1"/></svg>
<svg style="position:absolute;left:266px;top:116px;overflow:visible" width="14" height="12" viewBox="0 0 14 12"><path d="M0 0 H14 L8.5 5.5 V11 H5.5 V5.5 Z" fill="#2f74c0"/></svg>
<svg style="position:absolute;left:38px;top:113px;overflow:visible" width="16" height="16" viewBox="0 0 16 16"><circle cx="8" cy="8" r="7.5" fill="#b08468" stroke="#8c6450" stroke-width="1"/></svg>
<svg style="position:absolute;left:294px;top:116px;overflow:visible" width="14" height="12" viewBox="0 0 14 12"><path d="M0 0 H14 L8.5 5.5 V11 H5.5 V5.5 Z" fill="#b08468"/></svg>
<svg style="position:absolute;left:66px;top:113px;overflow:visible" width="16" height="16" viewBox="0 0 16 16"><circle cx="8" cy="8" r="7.5" fill="#58c4bc" stroke="#2aa8a0" stroke-width="1"/></svg>
<svg style="position:absolute;left:322px;top:116px;overflow:visible" width="14" height="12" viewBox="0 0 14 12"><path d="M0 0 H14 L8.5 5.5 V11 H5.5 V5.5 Z" fill="#58c4bc"/></svg>
<svg style="position:absolute;left:94px;top:113px;overflow:visible" width="16" height="16" viewBox="0 0 16 16"><circle cx="8" cy="8" r="7.5" fill="#ffb890" stroke="#f0a070" stroke-width="1"/></svg>
<svg style="position:absolute;left:350px;top:116px;overflow:visible" width="14" height="12" viewBox="0 0 14 12"><path d="M0 0 H14 L8.5 5.5 V11 H5.5 V5.5 Z" fill="#ffb890"/></svg>
<svg style="position:absolute;left:122px;top:113px;overflow:visible" width="16" height="16" viewBox="0 0 16 16"><circle cx="8" cy="8" r="7.5" fill="#7ede7e" stroke="#5cc85c" stroke-width="1"/></svg>
<svg style="position:absolute;left:378px;top:116px;overflow:visible" width="14" height="12" viewBox="0 0 14 12"><path d="M0 0 H14 L8.5 5.5 V11 H5.5 V5.5 Z" fill="#7ede7e"/></svg>
<svg style="position:absolute;left:150px;top:113px;overflow:visible" width="16" height="16" viewBox="0 0 16 16"><circle cx="8" cy="8" r="7.5" fill="#74ccf0" stroke="#54b4e0" stroke-width="1"/></svg>
<svg style="position:absolute;left:406px;top:116px;overflow:visible" width="14" height="12" viewBox="0 0 14 12"><path d="M0 0 H14 L8.5 5.5 V11 H5.5 V5.5 Z" fill="#74ccf0"/></svg>
<svg style="position:absolute;left:178px;top:113px;overflow:visible" width="16" height="16" viewBox="0 0 16 16"><circle cx="8" cy="8" r="7.5" fill="#e86690" stroke="#d04c78" stroke-width="1"/></svg>
<svg style="position:absolute;left:434px;top:116px;overflow:visible" width="14" height="12" viewBox="0 0 14 12"><path d="M0 0 H14 L8.5 5.5 V11 H5.5 V5.5 Z" fill="#e86690"/></svg>
<svg style="position:absolute;left:206px;top:113px;overflow:visible" width="16" height="16" viewBox="0 0 16 16"><circle cx="8" cy="8" r="7.5" fill="#f8f060" stroke="#e8d840" stroke-width="1"/></svg>
<svg style="position:absolute;left:462px;top:116px;overflow:visible" width="14" height="12" viewBox="0 0 14 12"><path d="M0 0 H14 L8.5 5.5 V11 H5.5 V5.5 Z" fill="#f8f060"/></svg>
<svg style="position:absolute;left:234px;top:113px;overflow:visible" width="16" height="16" viewBox="0 0 16 16"><circle cx="8" cy="8" r="7.5" fill="#cc6ce4" stroke="#b050d0" stroke-width="1"/></svg>
<svg style="position:absolute;left:490px;top:116px;overflow:visible" width="14" height="12" viewBox="0 0 14 12"><path d="M0 0 H14 L8.5 5.5 V11 H5.5 V5.5 Z" fill="#cc6ce4"/></svg>
<div style="left:258px;top:111px;width:1px;height:21px;background:#a0a0a0"></div>
<div style="left:259px;top:111px;width:1px;height:21px;background:#ffffff"></div>
<div style="left:513px;top:111px;width:1px;height:21px;background:#a0a0a0"></div>
<div style="left:514px;top:111px;width:1px;height:21px;background:#ffffff"></div>
<div style="left:552px;top:111px;width:1px;height:21px;background:#a0a0a0"></div>
<div style="left:553px;top:111px;width:1px;height:21px;background:#ffffff"></div>
<div style="left:632px;top:111px;width:1px;height:21px;background:#a0a0a0"></div>
<div style="left:633px;top:111px;width:1px;height:21px;background:#ffffff"></div>
<div style="left:684px;top:111px;width:1px;height:21px;background:#a0a0a0"></div>
<div style="left:685px;top:111px;width:1px;height:21px;background:#ffffff"></div>
<svg style="position:absolute;left:525px;top:114px;overflow:visible" width="16" height="16" viewBox="0 0 16 16"><circle cx="8" cy="8" r="7.2" fill="none" stroke="#606060" stroke-width="1.3"/><path d="M4.5 4.5 L11.5 11.5 M11.5 4.5 L4.5 11.5" stroke="#e02020" stroke-width="1.4"/></svg>
<svg style="position:absolute;left:559px;top:113px;overflow:visible" width="16" height="16" viewBox="0 0 16 16"><rect x="0.5" y="1.5" width="6" height="6" fill="#fff" stroke="#404040"/><rect x="0.5" y="9.5" width="6" height="6" fill="#fff" stroke="#404040"/><path d="M2 12 L3.5 14 L5.5 10.5" stroke="#108010" stroke-width="1.2" fill="none"/><path d="M8 2.5 H15 M8 5 H13 M8 7.5 H15 M8 10.5 H15 M8 13 H13 M8 15.5 H15" stroke="#209020" stroke-width="1.1"/></svg>
<svg style="position:absolute;left:584px;top:113px;overflow:visible" width="16" height="16" viewBox="0 0 16 16"><rect x="0.5" y="1.5" width="6" height="6" fill="#fff" stroke="#404040"/><rect x="0.5" y="9.5" width="6" height="6" fill="#fff" stroke="#404040"/><path d="M8 2.5 H15 M8 5 H13 M8 7.5 H15 M8 10.5 H15 M8 13 H13 M8 15.5 H15" stroke="#a0a0a0" stroke-width="1.1"/></svg>
<svg style="position:absolute;left:611px;top:115px;overflow:visible" width="14" height="14" viewBox="0 0 14 14"><path d="M0.5 1 H13.5 L8.5 6.5 V13 H5.5 V6.5 Z" fill="#c8c8c8" stroke="#909090" stroke-width="0.8"/></svg>
<svg style="position:absolute;left:637px;top:115px;overflow:visible" width="14" height="14" viewBox="0 0 14 14"><rect x="0" y="0" width="14" height="14" rx="1.5" fill="#8a8a8a"/><path d="M7 2.5 L11.5 7 H9 V11 H5 V7 H2.5 Z" fill="#c8c8c8"/></svg>
<svg style="position:absolute;left:663px;top:115px;overflow:visible" width="14" height="14" viewBox="0 0 14 14"><rect x="0" y="0" width="14" height="14" rx="1.5" fill="#8a8a8a"/><path d="M7 11.5 L11.5 7 H9 V3 H5 V7 H2.5 Z" fill="#c8c8c8"/></svg>
<svg style="position:absolute;left:689px;top:113px;overflow:visible" width="14" height="16" viewBox="0 0 14 16"><path d="M0.5 0.5 H9.5 L13.5 4.5 V15.5 H0.5 Z" fill="#f0f0f0" stroke="#b0b0b0"/><path d="M3 6 H11 M3 8.5 H11 M3 11 H11 M3 13.5 H11" stroke="#b8b8b8"/></svg>
<div class="t" style="left:711px;top:116px;font-size:11px;line-height:11px;font-weight:400;color:#000;">Критерии не заданы</div>
<div style="left:1299px;top:110px;width:1px;height:23px;background:#a0a0a0"></div>
<div style="left:1300px;top:110px;width:1px;height:23px;background:#ffffff"></div>
<div style="left:1305px;top:115px;width:14px;height:14px;background:linear-gradient(#ff5a5a,#e00000);border-radius:2px;box-shadow:0 0 0 1px #a01010 inset"></div>
<svg style="position:absolute;left:1305px;top:115px;overflow:visible" width="14" height="14" viewBox="0 0 14 14"><path d="M4.2 4.2 L9.799999999999999 9.799999999999999 M9.799999999999999 4.2 L4.2 9.799999999999999" stroke="#fff" stroke-width="2.4"/></svg>
<div style="left:1322px;top:108px;width:1px;height:26px;background:#a0a0a0"></div>
<div style="left:6px;top:183px;width:1300px;height:869px;background:#fff"></div>
<div style="left:5px;top:133px;width:1300px;height:50px;background:#f0f0f0"></div>
<div style="left:5px;top:133px;width:1318px;height:1px;background:#a0a0a0"></div>
<div style="left:5px;top:182px;width:1300px;height:1px;background:#a0a0a0"></div>
<div style="left:643px;top:165px;width:88px;height:17px;background:#c2dfc2"></div>
<div style="left:732px;top:165px;width:92px;height:17px;background:#c2dfc2"></div>
<div style="left:825px;top:165px;width:65px;height:17px;background:#c2dfc2"></div>
<div style="left:891px;top:165px;width:65px;height:17px;background:#c2dfc2"></div>
<div style="left:957px;top:165px;width:65px;height:17px;background:#c2dfc2"></div>
<div style="left:1023px;top:165px;width:65px;height:17px;background:#c2dfc2"></div>
<div style="left:1089px;top:165px;width:65px;height:17px;background:#c2dfc2"></div>
<div style="left:1155px;top:165px;width:65px;height:17px;background:#c2dfc2"></div>
<div style="left:1221px;top:165px;width:65px;height:17px;background:#c2dfc2"></div>
<div style="left:1287px;top:165px;width:18px;height:17px;background:#c2dfc2"></div>
<div style="left:642px;top:164px;width:663px;height:1px;background:#a0a0a0"></div>
<div style="left:524px;top:151px;width:118px;height:1px;background:#a0a0a0"></div>
<div style="left:5px;top:133px;width:1px;height:50px;background:#a0a0a0"></div>
<div style="left:17px;top:133px;width:1px;height:50px;background:#a0a0a0"></div>
<div style="left:35px;top:133px;width:1px;height:50px;background:#a0a0a0"></div>
<div style="left:53px;top:133px;width:1px;height:50px;background:#a0a0a0"></div>
<div style="left:91px;top:133px;width:1px;height:50px;background:#a0a0a0"></div>
<div style="left:166px;top:133px;width:1px;height:50px;background:#a0a0a0"></div>
<div style="left:242px;top:133px;width:1px;height:50px;background:#a0a0a0"></div>
<div style="left:473px;top:133px;width:1px;height:50px;background:#a0a0a0"></div>
<div style="left:524px;top:133px;width:1px;height:50px;background:#a0a0a0"></div>
<div style="left:591px;top:151px;width:1px;height:32px;background:#a0a0a0"></div>
<div style="left:642px;top:133px;width:1px;height:50px;background:#a0a0a0"></div>
<div style="left:731px;top:164px;width:1px;height:19px;background:#a0a0a0"></div>
<div style="left:824px;top:164px;width:1px;height:19px;background:#a0a0a0"></div>
<div style="left:890px;top:164px;width:1px;height:19px;background:#a0a0a0"></div>
<div style="left:956px;top:164px;width:1px;height:19px;background:#a0a0a0"></div>
<div style="left:1022px;top:164px;width:1px;height:19px;background:#a0a0a0"></div>
<div style="left:1088px;top:164px;width:1px;height:19px;background:#a0a0a0"></div>
<div style="left:1154px;top:164px;width:1px;height:19px;background:#a0a0a0"></div>
<div style="left:1220px;top:164px;width:1px;height:19px;background:#a0a0a0"></div>
<div style="left:1286px;top:164px;width:1px;height:19px;background:#a0a0a0"></div>
<div class="t" style="left:21px;top:154px;font-size:11px;line-height:11px;font-weight:400;color:#000;">Ти</div>
<div class="t" style="left:38px;top:154px;font-size:11px;line-height:11px;font-weight:400;color:#000;">Ут</div>
<div class="t" style="left:57px;top:153px;font-size:12px;line-height:12px;font-weight:700;color:#000;">№п/п</div>
<div class="t" style="left:95px;top:154px;font-size:11px;line-height:11px;font-weight:400;color:#000;">Связь с ВОР</div>
<div class="t" style="left:169px;top:154px;font-size:11px;line-height:11px;font-weight:400;color:#000;">Обоснование</div>
<div class="t" style="left:245px;top:154px;font-size:11px;line-height:11px;font-weight:400;color:#000;">Наименование</div>
<div style="left:474px;top:140px;width:50px;height:40px;overflow:hidden">
<div class="t" style="left:3px;top:7px;font-size:11px;line-height:11px;font-weight:400;color:#000;">Ед.изм.</div>
<div class="t" style="left:3px;top:20px;font-size:11px;line-height:11px;font-weight:400;color:#000;">(краткая)</div>
</div>
<div class="t" style="left:527px;top:138px;font-size:11px;line-height:11px;font-weight:400;color:#000;">Количество</div>
<div class="t" style="left:527px;top:156px;font-size:11px;line-height:11px;font-weight:400;color:#000;">Всего с</div>
<div class="t" style="left:527px;top:169px;font-size:11px;line-height:11px;font-weight:400;color:#000;">коэф.</div>
<div class="t" style="left:594px;top:156px;font-size:11px;line-height:11px;font-weight:400;color:#000;">Норма</div>
<div class="t" style="left:594px;top:169px;font-size:11px;line-height:11px;font-weight:400;color:#000;">расхода</div>
<div class="t" style="left:645px;top:145px;font-size:11px;line-height:11px;font-weight:400;color:#000;">Уровень цен</div>
<div class="t" style="left:645px;top:169px;font-size:11px;line-height:11px;font-weight:400;color:#000;">Всего</div>
<div class="t" style="left:734px;top:169px;font-size:11px;line-height:11px;font-weight:400;color:#000;">ПЗ</div>
<div class="t" style="left:827px;top:169px;font-size:11px;line-height:11px;font-weight:400;color:#000;">ОЗП</div>
<div class="t" style="left:892px;top:169px;font-size:11px;line-height:11px;font-weight:400;color:#000;">ЭММ</div>
<div class="t" style="left:959px;top:169px;font-size:11px;line-height:11px;font-weight:400;color:#000;">ЗПМ</div>
<div class="t" style="left:1025px;top:169px;font-size:11px;line-height:11px;font-weight:400;color:#000;">СтМат</div>
<div class="t" style="left:1091px;top:169px;font-size:11px;line-height:11px;font-weight:400;color:#000;">Прочие</div>
<div class="t" style="left:1157px;top:169px;font-size:11px;line-height:11px;font-weight:400;color:#000;">НР</div>
<div style="left:17px;top:183px;width:1288px;height:29px;background:#eaeafc"></div>
<div style="left:6px;top:183px;width:11px;height:29px;background:#f0f0f0"></div>
<div style="left:17px;top:213px;width:1288px;height:29px;background:#ffffff"></div>
<div style="left:6px;top:213px;width:11px;height:29px;background:#f0f0f0"></div>
<div style="left:17px;top:243px;width:1288px;height:29px;background:#ffe8e8"></div>
<div style="left:6px;top:243px;width:11px;height:29px;background:#f0f0f0"></div>
<div style="left:243px;top:213px;width:230px;height:29px;background:#a6a6a6"></div>
<div style="left:5px;top:212px;width:162px;height:1px;background:#808080"></div>
<div style="left:167px;top:212px;width:1138px;height:1px;background:#c4c4c4"></div>
<div style="left:5px;top:242px;width:162px;height:1px;background:#808080"></div>
<div style="left:167px;top:242px;width:1138px;height:1px;background:#c4c4c4"></div>
<div style="left:5px;top:272px;width:162px;height:1px;background:#808080"></div>
<div style="left:167px;top:272px;width:1138px;height:1px;background:#c4c4c4"></div>
<div style="left:5px;top:183px;width:1px;height:90px;background:#808080"></div>
<div style="left:17px;top:183px;width:1px;height:90px;background:#808080"></div>
<div style="left:35px;top:183px;width:1px;height:90px;background:#808080"></div>
<div style="left:53px;top:183px;width:1px;height:90px;background:#808080"></div>
<div style="left:91px;top:183px;width:1px;height:90px;background:#808080"></div>
<div style="left:166px;top:183px;width:1px;height:90px;background:#808080"></div>
<div style="left:242px;top:183px;width:1px;height:90px;background:#c4c4c4"></div>
<div style="left:473px;top:183px;width:1px;height:90px;background:#c4c4c4"></div>
<div style="left:524px;top:183px;width:1px;height:90px;background:#c4c4c4"></div>
<div style="left:591px;top:183px;width:1px;height:90px;background:#c4c4c4"></div>
<div style="left:642px;top:183px;width:1px;height:90px;background:#c4c4c4"></div>
<div style="left:731px;top:183px;width:1px;height:90px;background:#c4c4c4"></div>
<div style="left:824px;top:183px;width:1px;height:90px;background:#c4c4c4"></div>
<div style="left:890px;top:183px;width:1px;height:90px;background:#c4c4c4"></div>
<div style="left:956px;top:183px;width:1px;height:90px;background:#c4c4c4"></div>
<div style="left:1022px;top:183px;width:1px;height:90px;background:#c4c4c4"></div>
<div style="left:1088px;top:183px;width:1px;height:90px;background:#c4c4c4"></div>
<div style="left:1154px;top:183px;width:1px;height:90px;background:#c4c4c4"></div>
<div style="left:1220px;top:183px;width:1px;height:90px;background:#c4c4c4"></div>
<div style="left:1286px;top:183px;width:1px;height:90px;background:#c4c4c4"></div>
<div class="t" style="left:57px;top:186px;font-size:11px;line-height:11px;font-weight:400;color:#0000ff;">ЛС1</div>
<div style="left:39px;top:192px;width:11px;height:11px;background:#fff;border:1px solid #8a8a8a;box-sizing:border-box"></div>
<div class="t" style="left:168px;top:184px;font-size:11.6px;line-height:11.6px;font-weight:700;color:#0000ff;">Новая</div>
<div class="t" style="left:168px;top:197px;font-size:11.6px;line-height:11.6px;font-weight:700;color:#0000ff;">локальн</div>
<svg style="position:absolute;left:218px;top:183px;overflow:visible" width="24" height="22" viewBox="0 0 24 22"><path d="M0.5 13.5 L1 16 L14.5 21.5 L15 18.5 Z" fill="#dff0f4" stroke="#308060" stroke-width="0.9" stroke-dasharray="1.2 0.8"/><path d="M14.5 18.5 L23.5 4 L24 7 L15 21.5 Z" fill="#cfe0f8" stroke="#5080d0" stroke-width="0.8"/><path d="M0.5 13.5 L13 3.5 L23.5 0.5 L14.5 18.5 Z" fill="#fff"/><path d="M0.5 13.5 L13 3.5 L23.5 0.5 L14 12.5 Z" fill="#40d070"/><path d="M13 8 L17 6" stroke="#60e090" stroke-width="1.5"/><path d="M14 12.5 L23.5 0.5" stroke="#30a050" stroke-width="0.8"/><text x="16" y="13.5" font-size="6" font-weight="700" fill="#000" font-family="Liberation Sans" transform="rotate(-30 16 13)">ЛС</text></svg>
<div class="t" style="left:245px;top:186px;font-size:13.6px;line-height:13.6px;font-weight:700;color:#0000ff;">Новая локальная смета</div>
<svg style="position:absolute;left:9px;top:221px;overflow:visible" width="6" height="12" viewBox="0 0 6 12"><path d="M0 0 L6 6 L0 12 Z" fill="#000"/></svg>
<div style="left:39px;top:222px;width:11px;height:11px;background:#fff;border:1px solid #8a8a8a;box-sizing:border-box"></div>
<div class="t" style="left:57px;top:215px;font-size:11px;line-height:11px;font-weight:700;color:#8c00d4;">1</div>
<div class="t" style="left:169px;top:215px;font-size:12.4px;line-height:12.4px;font-weight:700;color:#8c00d4;">м07-04-028-</div>
<svg style="position:absolute;left:232px;top:226px;overflow:visible" width="8" height="14" viewBox="0 0 8 14"><path d="M0.8 4 H7.2 M4 0.8 V7.2" stroke="#4a9a10" stroke-width="2.4" stroke-linecap="round"/><path d="M1 12.3 H7" stroke="#f04a10" stroke-width="2.6" stroke-linecap="round"/></svg>
<div class="t" style="left:245px;top:216px;font-size:11px;line-height:11px;font-weight:400;color:#f4f4e8;">Насос погружной заливочный, масса 0,11 т</div>
<div class="t" style="left:476px;top:216px;font-size:11px;line-height:11px;font-weight:400;color:#8c00d4;">ШТ</div>
<div class="t" style="left:527px;top:216px;font-size:11px;line-height:11px;font-weight:400;color:#8c00d4;">1</div>
<div class="t" style="right:1029px;top:216px;font-size:11px;line-height:11px;font-weight:400;color:#8c00d4;text-align:right;">1 340,15</div>
<div class="t" style="right:936px;top:216px;font-size:11px;line-height:11px;font-weight:400;color:#8c00d4;text-align:right;">961,55</div>
<div class="t" style="right:871px;top:216px;font-size:11px;line-height:11px;font-weight:400;color:#8c00d4;text-align:right;">0</div>
<div class="t" style="right:804px;top:216px;font-size:11px;line-height:11px;font-weight:400;color:#8c00d4;text-align:right;">684,73</div>
<div class="t" style="right:738px;top:216px;font-size:11px;line-height:11px;font-weight:400;color:#8c00d4;text-align:right;">274,35</div>
<div class="t" style="right:672px;top:216px;font-size:11px;line-height:11px;font-weight:400;color:#8c00d4;text-align:right;">2,47</div>
<div class="t" style="right:606px;top:216px;font-size:11px;line-height:11px;font-weight:400;color:#8c00d4;text-align:right;">0</div>
<svg style="position:absolute;left:19px;top:252px;overflow:visible" width="16" height="11" viewBox="0 0 16 11"><g fill="#f07010" stroke="#d05000" stroke-width="0.5"><rect x="0.3" y="7" width="5" height="3" rx="1.4"/><rect x="5.3" y="7" width="5" height="3" rx="1.4"/><rect x="10.3" y="7" width="5" height="3" rx="1.4"/><rect x="2.5" y="4.2" width="5" height="3" rx="1.4"/><rect x="7.8" y="4.2" width="5" height="3" rx="1.4"/><rect x="5" y="1.3" width="5.5" height="3" rx="1.4"/></g><g stroke="#ffb070" stroke-width="0.7"><path d="M1.5 8 H4 M6.5 8 H9 M11.5 8 H14 M3.7 5.2 H6.2 M9 5.2 H11.5 M6.3 2.3 H9"/></g></svg>
<div class="t" style="left:57px;top:246px;font-size:11px;line-height:11px;font-weight:700;color:#8c00d4;">1,1</div>
<div style="left:167px;top:243px;width:75px;height:29px;overflow:hidden">
<div class="t" style="left:2px;top:2px;font-size:12.9px;line-height:12.9px;font-weight:700;color:#8c00d4;">421/пр_2020</div>
</div>
<div style="left:243px;top:243px;width:230px;height:29px;overflow:hidden">
<div class="t" style="left:2px;top:2px;font-size:11px;line-height:11px;font-weight:400;color:#8c00d4;">Сметная стоимость вспомогательных</div>
<div class="t" style="left:2px;top:15px;font-size:11px;line-height:11px;font-weight:400;color:#8c00d4;letter-spacing:-0.1px">ненормируемых материальных ресурсов, не</div>
</div>
<div class="t" style="left:476px;top:246px;font-size:11px;line-height:11px;font-weight:400;color:#8c00d4;">%</div>
<div class="t" style="left:527px;top:246px;font-size:11px;line-height:11px;font-weight:400;color:#8c00d4;">2</div>
<div class="t" style="left:594px;top:246px;font-size:11px;line-height:11px;font-weight:400;color:#8c00d4;">2</div>
<div class="t" style="left:685px;top:245px;font-size:11px;line-height:11px;font-weight:400;color:#8c00d4;">-</div>
<div class="t" style="right:936px;top:246px;font-size:11px;line-height:11px;font-weight:400;color:#8c00d4;text-align:right;">0</div>
<div class="t" style="right:871px;top:246px;font-size:11px;line-height:11px;font-weight:400;color:#8c00d4;text-align:right;">0</div>
<div class="t" style="right:804px;top:246px;font-size:11px;line-height:11px;font-weight:400;color:#8c00d4;text-align:right;">0</div>
<div class="t" style="right:738px;top:246px;font-size:11px;line-height:11px;font-weight:400;color:#8c00d4;text-align:right;">0</div>
<div class="t" style="right:672px;top:246px;font-size:11px;line-height:11px;font-weight:400;color:#8c00d4;text-align:right;">0</div>
<div class="t" style="right:606px;top:246px;font-size:11px;line-height:11px;font-weight:400;color:#8c00d4;text-align:right;">0</div>
<div class="t" style="right:540px;top:246px;font-size:11px;line-height:11px;font-weight:400;color:#8c00d4;text-align:right;">0</div>
<div class="t" style="right:474px;top:246px;font-size:11px;line-height:11px;font-weight:400;color:#8c00d4;text-align:right;">0</div>
<div style="left:1306px;top:134px;width:16px;height:918px;background:#f0f0f0"></div>
<svg style="position:absolute;left:1308px;top:138px;overflow:visible" width="12" height="10" viewBox="0 0 12 10"><path d="M2 7 L6 3 L10 7" stroke="#606060" stroke-width="2" fill="none"/></svg>
<div style="left:1306px;top:328px;width:15px;height:530px;background:#cdcdcd"></div>
<svg style="position:absolute;left:1308px;top:1038px;overflow:visible" width="12" height="10" viewBox="0 0 12 10"><path d="M2 3 L6 7 L10 3" stroke="#606060" stroke-width="2" fill="none"/></svg>
<div style="left:6px;top:1052px;width:1300px;height:18px;background:#f0f0f0"></div>
<svg style="position:absolute;left:9px;top:1054px;overflow:visible" width="10" height="12" viewBox="0 0 10 12"><path d="M7 2 L3 6 L7 10" stroke="#606060" stroke-width="2" fill="none"/></svg>
<div style="left:23px;top:1052px;width:17px;height:15px;background:#cdcdcd"></div>
<svg style="position:absolute;left:1292px;top:1054px;overflow:visible" width="10" height="12" viewBox="0 0 10 12"><path d="M3 2 L7 6 L3 10" stroke="#606060" stroke-width="2" fill="none"/></svg>
<div style="left:1306px;top:1052px;width:1px;height:16px;background:#ffffff"></div>
<div style="left:1306px;top:1051px;width:17px;height:1px;background:#ffffff"></div>
<div style="left:1322px;top:133px;width:1px;height:937px;background:#ffffff"></div>
<div style="left:5px;top:133px;width:1px;height:938px;background:#808080"></div>
<div style="left:77px;top:1069px;width:1250px;height:2px;background:#6a6a6a"></div>
<div style="left:1326px;top:104px;width:2px;height:967px;background:#6a6a6a"></div>
<div style="left:1326px;top:1071px;width:1px;height:20px;background:#a0a0a0"></div>
<div style="left:4px;top:1071px;width:72px;height:18px;background:#f0f0f0"></div>
<div style="left:3px;top:1089px;width:73px;height:2px;background:#808080"></div>
<div style="left:4px;top:1072px;width:72px;height:16px;border:1px dotted #000;box-sizing:border-box"></div>
<div class="t" style="left:10px;top:1077px;font-size:11px;line-height:11px;font-weight:400;color:#000;">Полный вид</div>
<div style="left:77px;top:1071px;width:106px;height:18px;background:#f0f0f0;border-left:1px solid #a0a0a0;border-right:2px solid #808080;border-bottom:2px solid #808080;border-bottom-right-radius:3px;border-bottom-left-radius:2px;box-sizing:border-box"></div>
<div class="t" style="left:82px;top:1075px;font-size:11px;line-height:11px;font-weight:400;color:#000;">Сокращенный вид</div>
<div style="left:186px;top:1071px;width:66px;height:18px;background:#f0f0f0;border-left:1px solid #a0a0a0;border-right:2px solid #808080;border-bottom:2px solid #808080;border-bottom-right-radius:3px;border-bottom-left-radius:2px;box-sizing:border-box"></div>
<div class="t" style="left:191px;top:1075px;font-size:11px;line-height:11px;font-weight:400;color:#000;">Вид строки</div>
<div style="left:255px;top:1071px;width:99px;height:18px;background:#f0f0f0;border-left:1px solid #a0a0a0;border-right:2px solid #808080;border-bottom:2px solid #808080;border-bottom-right-radius:3px;border-bottom-left-radius:2px;box-sizing:border-box"></div>
<div class="t" style="left:260px;top:1075px;font-size:11px;line-height:11px;font-weight:400;color:#000;">Объектная смета</div>
<div style="left:357px;top:1071px;width:84px;height:18px;background:#f0f0f0;border-left:1px solid #a0a0a0;border-right:2px solid #808080;border-bottom:2px solid #808080;border-bottom-right-radius:3px;border-bottom-left-radius:2px;box-sizing:border-box"></div>
<div class="t" style="left:362px;top:1075px;font-size:11px;line-height:11px;font-weight:400;color:#000;">Предпросмотр</div>
<div style="left:1329px;top:101px;width:1px;height:990px;background:#ffffff"></div>
<div style="left:1332px;top:101px;width:1px;height:990px;background:#c8c8c8"></div>
<div style="left:1333px;top:110px;width:409px;height:1px;background:#a0a0a0"></div>
<div style="left:1333px;top:111px;width:409px;height:1px;background:#ffffff"></div>
<div style="left:1333px;top:113px;width:409px;height:1px;background:#a0a0a0"></div>
<div style="left:1741px;top:109px;width:1px;height:6px;background:#a0a0a0"></div>
<div style="left:1744px;top:106px;width:10px;height:10px;border-top:1px solid #ffffff;border-left:1px solid #ffffff;border-right:1px solid #808080;border-bottom:1px solid #808080;box-sizing:border-box;background:#f0f0f0;"></div>
<svg style="position:absolute;left:1744px;top:106px;overflow:visible" width="10" height="10" viewBox="0 0 10 10"><path d="M2 2 L8 8 M8 2 L2 8" stroke="#000" stroke-width="1"/></svg>
<div style="left:1334px;top:120px;width:69px;height:18px;background:#f0f0f0;border-top:1px solid #fff;border-left:1px solid #fff;border-right:1px solid #e8e8e8;box-sizing:border-box"></div>
<div class="t" style="left:1339px;top:124px;font-size:11px;line-height:11px;font-weight:400;color:#000;">Панель цен</div>
<div style="left:1403px;top:118px;width:65px;height:20px;background:#f0f0f0;border-top:1px solid #fff;border-left:1px solid #fff;border-right:2px solid #808080;box-sizing:border-box"></div>
<div class="t" style="left:1410px;top:122px;font-size:11px;line-height:11px;font-weight:400;color:#000;">Поправки</div>
<div style="left:1332px;top:137px;width:71px;height:1px;background:#ffffff"></div>
<div style="left:1468px;top:137px;width:285px;height:1px;background:#ffffff"></div>
<div style="left:1332px;top:137px;width:1px;height:952px;background:#ffffff"></div>
<div style="left:1752px;top:137px;width:1px;height:952px;background:#808080"></div>
<div style="left:1332px;top:1088px;width:421px;height:1px;background:#808080"></div>
<div style="left:1339px;top:145px;width:80px;height:22px;background:#f0f0f0;border-top:1px solid #fff;border-left:1px solid #fff;border-right:2px solid #808080;box-sizing:border-box"></div>
<div class="t" style="left:1356px;top:148px;font-size:11px;line-height:11px;font-weight:400;color:#000;">Очистить</div>
<div style="left:1423px;top:145px;width:89px;height:22px;background:#f0f0f0;border-top:1px solid #fff;border-left:1px solid #fff;border-right:2px solid #808080;box-sizing:border-box"></div>
<div class="t" style="left:1439px;top:148px;font-size:11px;line-height:11px;font-weight:400;color:#000;">Справочник</div>
<div style="left:1517px;top:147px;width:13px;height:13px;background:#fff;border-top:1px solid #a0a0a0;border-left:1px solid #a0a0a0;border-right:1px solid #fff;border-bottom:1px solid #fff;box-sizing:border-box"></div>
<div style="left:1518px;top:148px;width:11px;height:11px;background:#fff;border-top:1px solid #696969;border-left:1px solid #696969;border-right:1px solid #e3e3e3;border-bottom:1px solid #e3e3e3;box-sizing:border-box"></div>
<svg style="position:absolute;left:1517px;top:147px;overflow:visible" width="13" height="13" viewBox="0 0 13 13"><path d="M3.5 5.5 L5.5 9 L10 3.5" stroke="#000" stroke-width="1.9" fill="none"/></svg>
<div class="t" style="left:1536px;top:148px;font-size:11px;line-height:11px;font-weight:400;color:#000;">Добавление</div>
<div style="left:1340px;top:228px;width:388px;height:176px;border-left:1px solid #808080;box-sizing:border-box"></div>
<div style="left:1340px;top:403px;width:405px;height:1px;background:#808080"></div>
<div style="left:1341px;top:233px;width:88px;height:19px;background:#d8fde8"></div>
<div style="left:1712px;top:233px;width:15px;height:19px;background:#d8fde8"></div>
<div style="left:1431px;top:235px;width:279px;height:15px;background:#fff"></div>
<div style="left:1696px;top:236px;width:13px;height:13px;background:#efefef"></div>
<svg style="position:absolute;left:1698px;top:240px;overflow:visible" width="9" height="5" viewBox="0 0 9 5"><path d="M0.5 0 H8.5 L4.5 4.5 Z" fill="#000"/></svg>
<div style="left:1713px;top:236px;width:13px;height:13px;background:#fff;border-top:1px solid #a0a0a0;border-left:1px solid #a0a0a0;border-right:1px solid #fff;border-bottom:1px solid #fff;box-sizing:border-box"></div>
<div style="left:1714px;top:237px;width:11px;height:11px;background:#fff;border-top:1px solid #696969;border-left:1px solid #696969;border-right:1px solid #e3e3e3;border-bottom:1px solid #e3e3e3;box-sizing:border-box"></div>
<svg style="position:absolute;left:1713px;top:236px;overflow:visible" width="13" height="13" viewBox="0 0 13 13"><path d="M3.5 5.5 L5.5 9 L10 3.5" stroke="#000" stroke-width="1.9" fill="none"/></svg>
<div class="t" style="left:1349px;top:237px;font-size:11px;line-height:11px;font-weight:400;color:#000;">ОЗП</div>
<div class="t" style="left:1433px;top:238px;font-size:11px;line-height:11px;font-weight:400;color:#000;">*(0,2+1)</div>
<div style="left:1341px;top:252px;width:88px;height:19px;background:#d8fde8"></div>
<div style="left:1712px;top:252px;width:15px;height:19px;background:#d8fde8"></div>
<div style="left:1431px;top:254px;width:279px;height:15px;background:#fff"></div>
<div style="left:1696px;top:255px;width:13px;height:13px;background:#efefef"></div>
<svg style="position:absolute;left:1698px;top:259px;overflow:visible" width="9" height="5" viewBox="0 0 9 5"><path d="M0.5 0 H8.5 L4.5 4.5 Z" fill="#000"/></svg>
<div style="left:1713px;top:255px;width:13px;height:13px;background:#fff;border-top:1px solid #a0a0a0;border-left:1px solid #a0a0a0;border-right:1px solid #fff;border-bottom:1px solid #fff;box-sizing:border-box"></div>
<div style="left:1714px;top:256px;width:11px;height:11px;background:#fff;border-top:1px solid #696969;border-left:1px solid #696969;border-right:1px solid #e3e3e3;border-bottom:1px solid #e3e3e3;box-sizing:border-box"></div>
<svg style="position:absolute;left:1713px;top:255px;overflow:visible" width="13" height="13" viewBox="0 0 13 13"><path d="M3.5 5.5 L5.5 9 L10 3.5" stroke="#000" stroke-width="1.9" fill="none"/></svg>
<div class="t" style="left:1349px;top:256px;font-size:11px;line-height:11px;font-weight:400;color:#000;">ТрудСтр</div>
<div class="t" style="left:1433px;top:257px;font-size:11px;line-height:11px;font-weight:400;color:#000;">*(0,2+1)</div>
<div style="left:1341px;top:271px;width:88px;height:19px;background:#d6e8fc"></div>
<div style="left:1712px;top:271px;width:15px;height:19px;background:#d6e8fc"></div>
<div style="left:1431px;top:273px;width:279px;height:15px;background:#fff"></div>
<div style="left:1696px;top:274px;width:13px;height:13px;background:#efefef"></div>
<svg style="position:absolute;left:1698px;top:278px;overflow:visible" width="9" height="5" viewBox="0 0 9 5"><path d="M0.5 0 H8.5 L4.5 4.5 Z" fill="#000"/></svg>
<div style="left:1713px;top:274px;width:13px;height:13px;background:#fff;border-top:1px solid #a0a0a0;border-left:1px solid #a0a0a0;border-right:1px solid #fff;border-bottom:1px solid #fff;box-sizing:border-box"></div>
<div style="left:1714px;top:275px;width:11px;height:11px;background:#fff;border-top:1px solid #696969;border-left:1px solid #696969;border-right:1px solid #e3e3e3;border-bottom:1px solid #e3e3e3;box-sizing:border-box"></div>
<svg style="position:absolute;left:1713px;top:274px;overflow:visible" width="13" height="13" viewBox="0 0 13 13"><path d="M3.5 5.5 L5.5 9 L10 3.5" stroke="#000" stroke-width="1.9" fill="none"/></svg>
<div class="t" style="left:1349px;top:275px;font-size:11px;line-height:11px;font-weight:400;color:#000;">ЭММ</div>
<div class="t" style="left:1433px;top:276px;font-size:11px;line-height:11px;font-weight:400;color:#000;">*(0,2+1)</div>
<div style="left:1341px;top:290px;width:88px;height:19px;background:#d6e8fc"></div>
<div style="left:1712px;top:290px;width:15px;height:19px;background:#d6e8fc"></div>
<div style="left:1431px;top:292px;width:279px;height:15px;background:#fff"></div>
<div style="left:1696px;top:293px;width:13px;height:13px;background:#efefef"></div>
<svg style="position:absolute;left:1698px;top:297px;overflow:visible" width="9" height="5" viewBox="0 0 9 5"><path d="M0.5 0 H8.5 L4.5 4.5 Z" fill="#000"/></svg>
<div style="left:1713px;top:293px;width:13px;height:13px;background:#fff;border-top:1px solid #a0a0a0;border-left:1px solid #a0a0a0;border-right:1px solid #fff;border-bottom:1px solid #fff;box-sizing:border-box"></div>
<div style="left:1714px;top:294px;width:11px;height:11px;background:#fff;border-top:1px solid #696969;border-left:1px solid #696969;border-right:1px solid #e3e3e3;border-bottom:1px solid #e3e3e3;box-sizing:border-box"></div>
<svg style="position:absolute;left:1713px;top:293px;overflow:visible" width="13" height="13" viewBox="0 0 13 13"><path d="M3.5 5.5 L5.5 9 L10 3.5" stroke="#000" stroke-width="1.9" fill="none"/></svg>
<div class="t" style="left:1349px;top:294px;font-size:11px;line-height:11px;font-weight:400;color:#000;">НормЭММ</div>
<div class="t" style="left:1433px;top:295px;font-size:11px;line-height:11px;font-weight:400;color:#000;">*(0,2+1)</div>
<div style="left:1341px;top:309px;width:88px;height:19px;background:#d6e8fc"></div>
<div style="left:1712px;top:309px;width:15px;height:19px;background:#d6e8fc"></div>
<div style="left:1431px;top:311px;width:279px;height:15px;background:#fff"></div>
<div style="left:1696px;top:312px;width:13px;height:13px;background:#efefef"></div>
<svg style="position:absolute;left:1698px;top:316px;overflow:visible" width="9" height="5" viewBox="0 0 9 5"><path d="M0.5 0 H8.5 L4.5 4.5 Z" fill="#000"/></svg>
<div style="left:1713px;top:312px;width:13px;height:13px;background:#fff;border-top:1px solid #a0a0a0;border-left:1px solid #a0a0a0;border-right:1px solid #fff;border-bottom:1px solid #fff;box-sizing:border-box"></div>
<div style="left:1714px;top:313px;width:11px;height:11px;background:#fff;border-top:1px solid #696969;border-left:1px solid #696969;border-right:1px solid #e3e3e3;border-bottom:1px solid #e3e3e3;box-sizing:border-box"></div>
<svg style="position:absolute;left:1713px;top:312px;overflow:visible" width="13" height="13" viewBox="0 0 13 13"><path d="M3.5 5.5 L5.5 9 L10 3.5" stroke="#000" stroke-width="1.9" fill="none"/></svg>
<div class="t" style="left:1349px;top:313px;font-size:11px;line-height:11px;font-weight:400;color:#000;">ЗПМ</div>
<div class="t" style="left:1433px;top:314px;font-size:11px;line-height:11px;font-weight:400;color:#000;">*(0,2+1)</div>
<div style="left:1341px;top:328px;width:88px;height:19px;background:#d6e8fc"></div>
<div style="left:1712px;top:328px;width:15px;height:19px;background:#d6e8fc"></div>
<div style="left:1431px;top:330px;width:279px;height:15px;background:#fff"></div>
<div style="left:1696px;top:331px;width:13px;height:13px;background:#efefef"></div>
<svg style="position:absolute;left:1698px;top:335px;overflow:visible" width="9" height="5" viewBox="0 0 9 5"><path d="M0.5 0 H8.5 L4.5 4.5 Z" fill="#000"/></svg>
<div style="left:1713px;top:331px;width:13px;height:13px;background:#fff;border-top:1px solid #a0a0a0;border-left:1px solid #a0a0a0;border-right:1px solid #fff;border-bottom:1px solid #fff;box-sizing:border-box"></div>
<div style="left:1714px;top:332px;width:11px;height:11px;background:#fff;border-top:1px solid #696969;border-left:1px solid #696969;border-right:1px solid #e3e3e3;border-bottom:1px solid #e3e3e3;box-sizing:border-box"></div>
<svg style="position:absolute;left:1713px;top:331px;overflow:visible" width="13" height="13" viewBox="0 0 13 13"><path d="M3.5 5.5 L5.5 9 L10 3.5" stroke="#000" stroke-width="1.9" fill="none"/></svg>
<div class="t" style="left:1349px;top:332px;font-size:11px;line-height:11px;font-weight:400;color:#000;">ТрудМаш</div>
<div class="t" style="left:1433px;top:333px;font-size:11px;line-height:11px;font-weight:400;color:#000;">*(0,2+1)</div>
<div style="left:1341px;top:347px;width:88px;height:19px;background:#fde8e8"></div>
<div style="left:1712px;top:347px;width:15px;height:19px;background:#fde8e8"></div>
<div style="left:1431px;top:349px;width:279px;height:15px;background:#fff"></div>
<div style="left:1696px;top:350px;width:13px;height:13px;background:#efefef"></div>
<svg style="position:absolute;left:1698px;top:354px;overflow:visible" width="9" height="5" viewBox="0 0 9 5"><path d="M0.5 0 H8.5 L4.5 4.5 Z" fill="#000"/></svg>
<div style="left:1713px;top:350px;width:13px;height:13px;background:#fff;border-top:1px solid #a0a0a0;border-left:1px solid #a0a0a0;border-right:1px solid #fff;border-bottom:1px solid #fff;box-sizing:border-box"></div>
<div style="left:1714px;top:351px;width:11px;height:11px;background:#fff;border-top:1px solid #696969;border-left:1px solid #696969;border-right:1px solid #e3e3e3;border-bottom:1px solid #e3e3e3;box-sizing:border-box"></div>
<svg style="position:absolute;left:1713px;top:350px;overflow:visible" width="13" height="13" viewBox="0 0 13 13"><path d="M3.5 5.5 L5.5 9 L10 3.5" stroke="#000" stroke-width="1.9" fill="none"/></svg>
<div class="t" style="left:1349px;top:351px;font-size:11px;line-height:11px;font-weight:400;color:#000;">СтМат</div>
<div style="left:1341px;top:366px;width:88px;height:19px;background:#fde8e8"></div>
<div style="left:1712px;top:366px;width:15px;height:19px;background:#fde8e8"></div>
<div style="left:1431px;top:368px;width:279px;height:15px;background:#fff"></div>
<div style="left:1696px;top:369px;width:13px;height:13px;background:#efefef"></div>
<svg style="position:absolute;left:1698px;top:373px;overflow:visible" width="9" height="5" viewBox="0 0 9 5"><path d="M0.5 0 H8.5 L4.5 4.5 Z" fill="#000"/></svg>
<div style="left:1713px;top:369px;width:13px;height:13px;background:#fff;border-top:1px solid #a0a0a0;border-left:1px solid #a0a0a0;border-right:1px solid #fff;border-bottom:1px solid #fff;box-sizing:border-box"></div>
<div style="left:1714px;top:370px;width:11px;height:11px;background:#fff;border-top:1px solid #696969;border-left:1px solid #696969;border-right:1px solid #e3e3e3;border-bottom:1px solid #e3e3e3;box-sizing:border-box"></div>
<svg style="position:absolute;left:1713px;top:369px;overflow:visible" width="13" height="13" viewBox="0 0 13 13"><path d="M3.5 5.5 L5.5 9 L10 3.5" stroke="#000" stroke-width="1.9" fill="none"/></svg>
<div class="t" style="left:1349px;top:370px;font-size:11px;line-height:11px;font-weight:400;color:#000;">НормРасхМат</div>
<div style="left:1341px;top:385px;width:88px;height:19px;background:#f0f0f0"></div>
<div style="left:1712px;top:385px;width:15px;height:19px;background:#f0f0f0"></div>
<div style="left:1431px;top:387px;width:279px;height:15px;background:#fff"></div>
<div style="left:1696px;top:388px;width:13px;height:13px;background:#efefef"></div>
<svg style="position:absolute;left:1698px;top:392px;overflow:visible" width="9" height="5" viewBox="0 0 9 5"><path d="M0.5 0 H8.5 L4.5 4.5 Z" fill="#000"/></svg>
<div style="left:1713px;top:388px;width:13px;height:13px;background:#fff;border-top:1px solid #a0a0a0;border-left:1px solid #a0a0a0;border-right:1px solid #fff;border-bottom:1px solid #fff;box-sizing:border-box"></div>
<div style="left:1714px;top:389px;width:11px;height:11px;background:#fff;border-top:1px solid #696969;border-left:1px solid #696969;border-right:1px solid #e3e3e3;border-bottom:1px solid #e3e3e3;box-sizing:border-box"></div>
<svg style="position:absolute;left:1713px;top:388px;overflow:visible" width="13" height="13" viewBox="0 0 13 13"><path d="M3.5 5.5 L5.5 9 L10 3.5" stroke="#000" stroke-width="1.9" fill="none"/></svg>
<div class="t" style="left:1349px;top:389px;font-size:11px;line-height:11px;font-weight:400;color:#000;">Прочие</div>
<div style="left:1340px;top:403px;width:405px;height:1px;background:#808080"></div>
<div style="left:1728px;top:228px;width:16px;height:131px;background:#f0f0f0;border-right:2px solid #808080;border-bottom:2px solid #808080;box-sizing:border-box"></div>
<div style="left:1728px;top:359px;width:16px;height:28px;background:repeating-conic-gradient(#e4e4e4 0% 25%, #f8f8f8 0% 50%) 0 0/2px 2px"></div>
<div style="left:1728px;top:388px;width:16px;height:16px;background:#f0f0f0;border-top:1px solid #fff;border-left:1px solid #fff;border-right:2px solid #808080;border-bottom:2px solid #808080;box-sizing:border-box"></div>
<svg style="position:absolute;left:1731px;top:393px;overflow:visible" width="9" height="5" viewBox="0 0 9 5"><path d="M0.5 0 H8.5 L4.5 4.5 Z" fill="#000"/></svg>
<div style="left:1339px;top:416px;width:370px;height:569px;background:#fff;border-top:2px solid #808080;border-left:2px solid #808080;box-sizing:border-box"></div>
<div style="left:1726px;top:418px;width:17px;height:566px;background:#f0f0f0"></div>
<svg style="position:absolute;left:1729px;top:421px;overflow:visible" width="10" height="8" viewBox="0 0 10 8"><path d="M2 6 L5 3 L8 6" stroke="#c0c0c0" stroke-width="1.6" fill="none"/></svg>
<svg style="position:absolute;left:1729px;top:972px;overflow:visible" width="10" height="8" viewBox="0 0 10 8"><path d="M2 2 L5 5 L8 2" stroke="#c0c0c0" stroke-width="1.6" fill="none"/></svg>
<div style="left:1709px;top:416px;width:35px;height:569px;background:#fff;border-top:2px solid #808080;box-sizing:border-box"></div>
<div style="left:1726px;top:418px;width:17px;height:566px;background:#f0f0f0"></div>
<svg style="position:absolute;left:1729px;top:421px;overflow:visible" width="10" height="8" viewBox="0 0 10 8"><path d="M2 6 L5 3 L8 6" stroke="#c0c0c0" stroke-width="1.6" fill="none"/></svg>
<svg style="position:absolute;left:1729px;top:972px;overflow:visible" width="10" height="8" viewBox="0 0 10 8"><path d="M2 2 L5 5 L8 2" stroke="#c0c0c0" stroke-width="1.6" fill="none"/></svg>
<div style="left:1744px;top:416px;width:1px;height:569px;background:#ffffff"></div>
<div style="left:1340px;top:984px;width:405px;height:1px;background:#ffffff"></div>
<div class="t" style="left:1342px;top:421px;font-size:11px;line-height:11px;font-weight:400;color:#000;">Поправка: 421/пр_2020_прил.10_т.1_п.4_гр.4</div>
<div class="t" style="left:1342px;top:434px;font-size:11px;line-height:11px;font-weight:400;color:#000;">Наименование: Производство работ осуществляется в охранной зоне</div>
<div class="t" style="left:1342px;top:447px;font-size:11px;line-height:11px;font-weight:400;color:#000;">действующей воздушной линии электропередачи, вблизи объектов,</div>
<div class="t" style="left:1342px;top:460px;font-size:11px;line-height:11px;font-weight:400;color:#000;">находящихся под напряжением, внутри объектов капитального</div>
<div class="t" style="left:1342px;top:473px;font-size:11px;line-height:11px;font-weight:400;color:#000;">строительства, внутренняя проводка в которых не обесточена, если это</div>
<div class="t" style="left:1342px;top:486px;font-size:11px;line-height:11px;font-weight:400;color:#000;">приведет к ограничению действий рабочих в соответствии с требованиями</div>
<div class="t" style="left:1342px;top:499px;font-size:11px;line-height:11px;font-weight:400;color:#000;">техники безопасности</div>
<div style="left:1339px;top:990px;width:13px;height:13px;background:#fff;border-top:1px solid #a0a0a0;border-left:1px solid #a0a0a0;border-right:1px solid #fff;border-bottom:1px solid #fff;box-sizing:border-box"></div>
<div style="left:1340px;top:991px;width:11px;height:11px;background:#fff;border-top:1px solid #696969;border-left:1px solid #696969;border-right:1px solid #e3e3e3;border-bottom:1px solid #e3e3e3;box-sizing:border-box"></div>
<div class="t" style="left:1357px;top:991px;font-size:11px;line-height:11px;font-weight:400;color:#000;">Показывать в наименовании</div>
<div style="left:1341px;top:1012px;width:411px;height:22px;background:repeating-conic-gradient(#e8e8e8 0% 25%, #f8f8f8 0% 50%) 0 0/2px 2px"></div>
<svg style="position:absolute;left:1330px;top:1005px;overflow:visible" width="425" height="25" viewBox="0 0 425 25"><path d="M5 7 H14 L17.5 22 H84 L88.5 7 H422" stroke="#707070" stroke-width="1.4" fill="none"/><path d="M88.5 7 L91 22 H144 L148 7 Z" fill="#fff" stroke="#707070" stroke-width="1.4"/></svg>
<div class="t" style="left:1349px;top:1015px;font-size:11px;line-height:11px;font-weight:400;color:#000;">Примечание</div>
<div class="t" style="left:1422px;top:1015px;font-size:11px;line-height:11px;font-weight:400;color:#000;">Поправка</div>
<div style="left:1343px;top:1039px;width:13px;height:13px;background:#fff;border-top:1px solid #a0a0a0;border-left:1px solid #a0a0a0;border-right:1px solid #fff;border-bottom:1px solid #fff;box-sizing:border-box"></div>
<div style="left:1344px;top:1040px;width:11px;height:11px;background:#fff;border-top:1px solid #696969;border-left:1px solid #696969;border-right:1px solid #e3e3e3;border-bottom:1px solid #e3e3e3;box-sizing:border-box"></div>
<svg style="position:absolute;left:1343px;top:1039px;overflow:visible" width="13" height="13" viewBox="0 0 13 13"><path d="M3.5 5.5 L5.5 9 L10 3.5" stroke="#000" stroke-width="1.9" fill="none"/></svg>
<div class="t" style="left:1361px;top:1040px;font-size:11px;line-height:11px;font-weight:400;color:#000;">Заменять назначенные</div>
<div style="left:1343px;top:1058px;width:195px;height:24px;background:#f0f0f0;border-top:1px solid #fff;border-left:1px solid #fff;border-right:2px solid #808080;border-bottom:2px solid #808080;box-sizing:border-box"></div>
<div class="t" style="left:1412px;top:1064px;font-size:11px;line-height:11px;font-weight:400;color:#a0a0a0;">Применить</div>
<div style="left:1547px;top:1058px;width:195px;height:24px;background:#f0f0f0;border-top:1px solid #fff;border-left:1px solid #fff;border-right:2px solid #808080;border-bottom:2px solid #808080;box-sizing:border-box"></div>
<div class="t" style="left:1619px;top:1064px;font-size:11px;line-height:11px;font-weight:400;color:#a0a0a0;">Отменить</div>
<div style="left:2px;top:1092px;width:1754px;height:1px;background:#ffffff"></div>
<div style="left:2px;top:1093px;width:1754px;height:1px;background:#ffffff"></div>
<div style="left:4px;top:1094px;width:85px;height:26px;border-top:1px solid #a0a0a0;border-left:1px solid #a0a0a0;border-right:1px solid #fff;border-bottom:1px solid #fff;box-sizing:border-box"></div>
<div style="left:92px;top:1094px;width:297px;height:26px;border-top:1px solid #a0a0a0;border-left:1px solid #a0a0a0;border-right:1px solid #fff;border-bottom:1px solid #fff;box-sizing:border-box"></div>
<div style="left:393px;top:1094px;width:1291px;height:26px;border-top:1px solid #a0a0a0;border-left:1px solid #a0a0a0;border-right:1px solid #fff;border-bottom:1px solid #fff;box-sizing:border-box"></div>
<div style="left:1689px;top:1094px;width:29px;height:26px;border-top:1px solid #a0a0a0;border-left:1px solid #a0a0a0;border-right:1px solid #fff;border-bottom:1px solid #fff;box-sizing:border-box"></div>
<div style="left:1723px;top:1094px;width:29px;height:26px;border-top:1px solid #a0a0a0;border-left:1px solid #a0a0a0;border-right:1px solid #fff;border-bottom:1px solid #fff;box-sizing:border-box"></div>
<div class="t" style="left:398px;top:1101px;font-size:12px;line-height:12px;font-weight:400;color:#000;">ИТОГО (руб)</div>
<div class="t" style="left:474px;top:1101px;font-size:12px;line-height:12px;font-weight:400;color:#000;letter-spacing:-0.4px">По ЛС: 1 340,15</div>
<div class="t" style="left:572px;top:1101px;font-size:12px;line-height:12px;font-weight:400;color:#000;letter-spacing:-0.3px">По объекту: 1 340,15</div>
<svg style="position:absolute;left:1695px;top:1098px;overflow:visible" width="18" height="18" viewBox="0 0 18 18"><circle cx="9" cy="9" r="7" fill="#a8a8a8"/><rect x="8" y="5" width="2" height="8" fill="#fff"/><path d="M2 2 L16 16" stroke="#e01010" stroke-width="2"/></svg>
<div class="t" style="left:1731px;top:1101px;font-size:12px;line-height:12px;font-weight:400;color:#000;">RU</div>
<div style="left:1159px;top:158px;width:597px;height:71px;background:#ffffe1;border:1.5px solid #000;border-radius:6px;box-sizing:border-box"></div>
<svg style="position:absolute;left:1543px;top:141px;overflow:visible" width="17" height="19" viewBox="0 0 17 19"><path d="M1 18.5 V1.8 L15.5 17.5" fill="#ffffe1" stroke="#000" stroke-width="1.5"/><rect x="1.8" y="17" width="13" height="3" fill="#ffffe1"/></svg>
<svg style="position:absolute;left:1171px;top:167px;overflow:visible" width="17" height="17" viewBox="0 0 17 17"><path d="M8.5 1 C13 1 16 3.5 16 6.8 C16 9.8 13.5 12 10.5 12.5 L10.5 15.5 L7.2 12.6 C3.6 12.3 1 9.9 1 6.8 C1 3.5 4 1 8.5 1 Z" fill="#fff" stroke="#303030" stroke-width="1.2"/><rect x="7.2" y="2.6" width="2.8" height="2" fill="#1818f0"/><path d="M5.8 5.6 H10 V9.8 H11.4 V11.2 H5.6 V9.8 H7.2 V7 H5.8 Z" fill="#1818f0"/></svg>
<div class="t" style="left:1195px;top:170px;font-size:12px;line-height:12px;font-weight:700;color:#000;">Информация</div>
<div class="t" style="left:1171px;top:191px;font-size:12px;line-height:12px;font-weight:400;color:#000;">Проверьте необходимость назначения поправки на вспомогательные ненормируемые материальные</div>
<div class="t" style="left:1171px;top:206px;font-size:12px;line-height:12px;font-weight:400;color:#000;">ресурсы.</div></body></html>
